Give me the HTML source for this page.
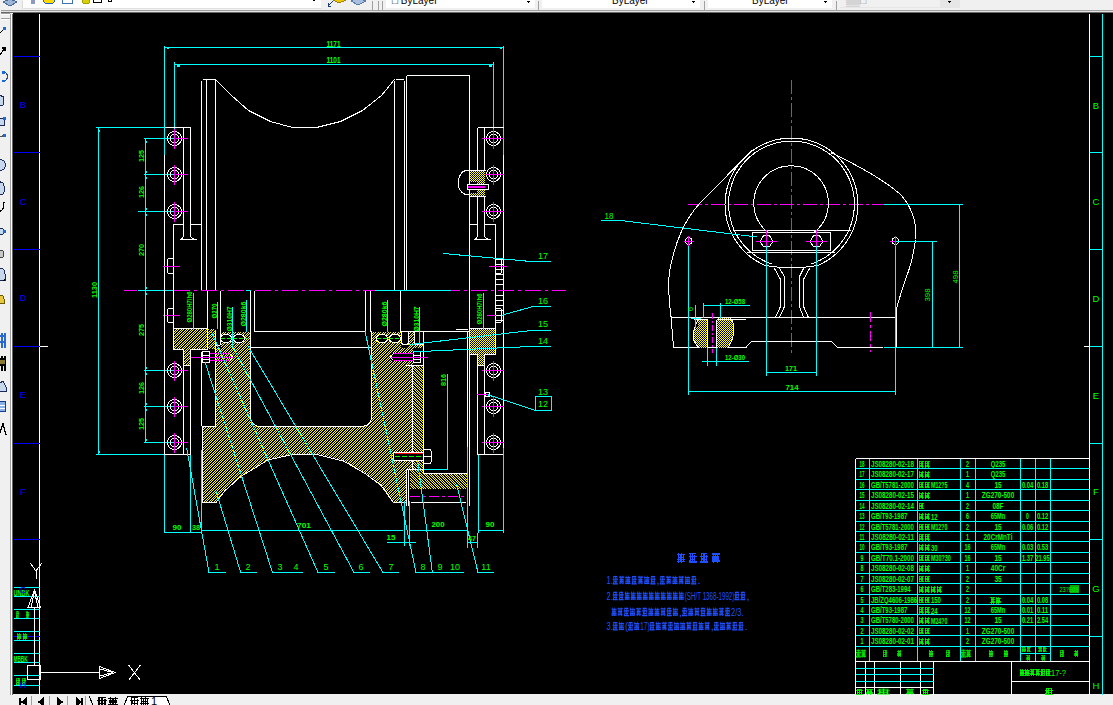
<!DOCTYPE html>
<html><head><meta charset="utf-8">
<style>
html,body{margin:0;padding:0;width:1113px;height:705px;overflow:hidden;background:#000;font-family:"Liberation Sans",sans-serif;}
#s{position:absolute;left:0;top:0;}
text{font-family:"Liberation Sans",sans-serif;}
</style></head><body>
<svg id="s" width="1113" height="705" viewBox="0 0 1113 705" shape-rendering="crispEdges">
<defs>
<pattern id="hat" width="5" height="5" patternUnits="userSpaceOnUse"><rect width="5" height="5" fill="#000"/><rect x="0" y="0" width="1" height="1" fill="#ff0"/><rect x="2" y="0" width="1" height="1" fill="#ff0"/><rect x="1" y="1" width="1" height="1" fill="#ff0"/><rect x="4" y="1" width="1" height="1" fill="#ff0"/><rect x="0" y="2" width="1" height="1" fill="#ff0"/><rect x="3" y="2" width="1" height="1" fill="#ff0"/><rect x="2" y="3" width="1" height="1" fill="#ff0"/><rect x="4" y="3" width="1" height="1" fill="#ff0"/><rect x="1" y="4" width="1" height="1" fill="#ff0"/><rect x="3" y="4" width="1" height="1" fill="#ff0"/></pattern>
<pattern id="hat2" width="5" height="5" patternUnits="userSpaceOnUse"><rect width="5" height="5" fill="#000"/><rect x="0" y="0" width="1" height="1" fill="#ff0"/><rect x="2" y="0" width="1" height="1" fill="#ff0"/><rect x="1" y="1" width="1" height="1" fill="#ff0"/><rect x="3" y="1" width="1" height="1" fill="#ff0"/><rect x="2" y="2" width="1" height="1" fill="#ff0"/><rect x="4" y="2" width="1" height="1" fill="#ff0"/><rect x="0" y="3" width="1" height="1" fill="#ff0"/><rect x="3" y="3" width="1" height="1" fill="#ff0"/><rect x="1" y="4" width="1" height="1" fill="#ff0"/><rect x="4" y="4" width="1" height="1" fill="#ff0"/></pattern>
<pattern id="xhat" width="2" height="2" patternUnits="userSpaceOnUse"><rect width="2" height="2" fill="#000"/><rect width="1" height="1" fill="#ff0"/><rect x="1" y="1" width="1" height="1" fill="#ff0"/></pattern>
<symbol id="hz0" viewBox="0 0 10 10" overflow="visible"><path d="M0,1.5H10M1,4.5H9M0,8.5H10M2.5,0V10M7.5,0V10M5,1.5V8.5M1,6.5H9" stroke="currentColor" stroke-width="1.3" fill="none"/></symbol>
<symbol id="hz1" viewBox="0 0 10 10" overflow="visible"><path d="M1,1H9M0,4H10M2,7H8M0,9.5H10M2,1V10M5,0V10M8,2V9M3,5L1,9" stroke="currentColor" stroke-width="1.3" fill="none"/></symbol>
<symbol id="hz2" viewBox="0 0 10 10" overflow="visible"><path d="M0,2H10M1,5H9M0,9H10M1.5,0V10M4,2V9M6,0V10M8.5,2V9M0,7H10" stroke="currentColor" stroke-width="1.3" fill="none"/></symbol>
</defs>
<rect x="0" y="0" width="1113" height="13" fill="#f0f0f0"/>
<rect x="0" y="0" width="13" height="705" fill="#f0f0f0"/>
<rect x="0" y="694" width="1113" height="11" fill="#f0f0f0"/>
<rect x="13" y="13" width="1100" height="681" fill="#000"/>
<g shape-rendering="crispEdges">
<line x1="39.5" y1="13.5" x2="39.5" y2="694.5" stroke="#ffffff" stroke-width="1" />
<line x1="13.5" y1="56.5" x2="39.5" y2="56.5" stroke="#0000ff" stroke-width="1" />
<line x1="13.5" y1="152.5" x2="39.5" y2="152.5" stroke="#0000ff" stroke-width="1" />
<line x1="13.5" y1="249.5" x2="39.5" y2="249.5" stroke="#0000ff" stroke-width="1" />
<line x1="13.5" y1="346.5" x2="39.5" y2="346.5" stroke="#0000ff" stroke-width="1" />
<line x1="13.5" y1="443.5" x2="39.5" y2="443.5" stroke="#0000ff" stroke-width="1" />
<line x1="13.5" y1="539.5" x2="39.5" y2="539.5" stroke="#0000ff" stroke-width="1" />
<line x1="13.5" y1="636.5" x2="39.5" y2="636.5" stroke="#0000ff" stroke-width="1" />
<line x1="39.5" y1="346.5" x2="47.5" y2="346.5" stroke="#ffffff" stroke-width="1" />
<text x="23" y="108.0" fill="#0000ff" font-size="9.5"  text-anchor="middle" >B</text>
<text x="23" y="204.7" fill="#0000ff" font-size="9.5"  text-anchor="middle" >C</text>
<text x="23" y="301.4" fill="#0000ff" font-size="9.5"  text-anchor="middle" >D</text>
<text x="23" y="398.1" fill="#0000ff" font-size="9.5"  text-anchor="middle" >E</text>
<text x="23" y="494.8" fill="#0000ff" font-size="9.5"  text-anchor="middle" >F</text>
<line x1="1089.5" y1="13.5" x2="1089.5" y2="694.5" stroke="#ffffff" stroke-width="1" />
<line x1="1102.5" y1="13.5" x2="1102.5" y2="694.5" stroke="#00ffff" stroke-width="1" />
<line x1="1089.5" y1="56.5" x2="1102.5" y2="56.5" stroke="#00ffff" stroke-width="1" />
<line x1="1089.5" y1="152.5" x2="1102.5" y2="152.5" stroke="#00ffff" stroke-width="1" />
<line x1="1089.5" y1="249.5" x2="1102.5" y2="249.5" stroke="#00ffff" stroke-width="1" />
<line x1="1089.5" y1="346.5" x2="1102.5" y2="346.5" stroke="#00ffff" stroke-width="1" />
<line x1="1089.5" y1="443.5" x2="1102.5" y2="443.5" stroke="#00ffff" stroke-width="1" />
<line x1="1089.5" y1="539.5" x2="1102.5" y2="539.5" stroke="#00ffff" stroke-width="1" />
<line x1="1089.5" y1="636.5" x2="1102.5" y2="636.5" stroke="#00ffff" stroke-width="1" />
<line x1="1083.5" y1="346.5" x2="1089.5" y2="346.5" stroke="#ffffff" stroke-width="1" />
<text x="1096" y="108.5" fill="#00ff00" font-size="9.5"  text-anchor="middle" >B</text>
<text x="1096" y="205.2" fill="#00ff00" font-size="9.5"  text-anchor="middle" >C</text>
<text x="1096" y="301.9" fill="#00ff00" font-size="9.5"  text-anchor="middle" >D</text>
<text x="1096" y="398.6" fill="#00ff00" font-size="9.5"  text-anchor="middle" >E</text>
<text x="1096" y="495.3" fill="#00ff00" font-size="9.5"  text-anchor="middle" >F</text>
<text x="1096" y="592.0" fill="#00ff00" font-size="9.5"  text-anchor="middle" >G</text>
<text x="1096" y="688.7" fill="#00ff00" font-size="9.5"  text-anchor="middle" >H</text>
</g>
<g shape-rendering="crispEdges">
<line x1="855.5" y1="468.5" x2="1089.5" y2="468.5" stroke="#00ffff" stroke-width="1" />
<line x1="855.5" y1="479.5" x2="1089.5" y2="479.5" stroke="#00ffff" stroke-width="1" />
<line x1="855.5" y1="489.5" x2="1089.5" y2="489.5" stroke="#00ffff" stroke-width="1" />
<line x1="855.5" y1="500.5" x2="1089.5" y2="500.5" stroke="#00ffff" stroke-width="1" />
<line x1="855.5" y1="510.5" x2="1089.5" y2="510.5" stroke="#00ffff" stroke-width="1" />
<line x1="855.5" y1="521.5" x2="1089.5" y2="521.5" stroke="#00ffff" stroke-width="1" />
<line x1="855.5" y1="531.5" x2="1089.5" y2="531.5" stroke="#00ffff" stroke-width="1" />
<line x1="855.5" y1="541.5" x2="1089.5" y2="541.5" stroke="#00ffff" stroke-width="1" />
<line x1="855.5" y1="552.5" x2="1089.5" y2="552.5" stroke="#00ffff" stroke-width="1" />
<line x1="855.5" y1="562.5" x2="1089.5" y2="562.5" stroke="#00ffff" stroke-width="1" />
<line x1="855.5" y1="573.5" x2="1089.5" y2="573.5" stroke="#00ffff" stroke-width="1" />
<line x1="855.5" y1="583.5" x2="1089.5" y2="583.5" stroke="#00ffff" stroke-width="1" />
<line x1="855.5" y1="594.5" x2="1089.5" y2="594.5" stroke="#00ffff" stroke-width="1" />
<line x1="855.5" y1="604.5" x2="1089.5" y2="604.5" stroke="#00ffff" stroke-width="1" />
<line x1="855.5" y1="614.5" x2="1089.5" y2="614.5" stroke="#00ffff" stroke-width="1" />
<line x1="855.5" y1="625.5" x2="1089.5" y2="625.5" stroke="#00ffff" stroke-width="1" />
<line x1="855.5" y1="635.5" x2="1089.5" y2="635.5" stroke="#00ffff" stroke-width="1" />
<line x1="855.5" y1="646.5" x2="1089.5" y2="646.5" stroke="#00ffff" stroke-width="1" />
<line x1="855.5" y1="458.5" x2="1089.5" y2="458.5" stroke="#ffffff" stroke-width="1" />
<line x1="855.5" y1="458.5" x2="855.5" y2="694.5" stroke="#ffffff" stroke-width="1" />
<line x1="869.5" y1="458.5" x2="869.5" y2="661.5" stroke="#00ffff" stroke-width="1" />
<line x1="917.5" y1="458.5" x2="917.5" y2="661.5" stroke="#00ffff" stroke-width="1" />
<line x1="960.5" y1="458.5" x2="960.5" y2="661.5" stroke="#00ffff" stroke-width="1" />
<line x1="975.5" y1="458.5" x2="975.5" y2="661.5" stroke="#00ffff" stroke-width="1" />
<line x1="1020.5" y1="458.5" x2="1020.5" y2="661.5" stroke="#00ffff" stroke-width="1" />
<line x1="1035.5" y1="458.5" x2="1035.5" y2="661.5" stroke="#00ffff" stroke-width="1" />
<line x1="1050.5" y1="458.5" x2="1050.5" y2="661.5" stroke="#00ffff" stroke-width="1" />
<line x1="1020.5" y1="653.5" x2="1050.5" y2="653.5" stroke="#00ffff" stroke-width="1" />
<line x1="855.5" y1="661.5" x2="1089.5" y2="661.5" stroke="#ffffff" stroke-width="1" />
<line x1="865.5" y1="661.5" x2="865.5" y2="694.5" stroke="#ffffff" stroke-width="1" />
<line x1="874.5" y1="661.5" x2="874.5" y2="694.5" stroke="#ffffff" stroke-width="1" />
<line x1="900.5" y1="661.5" x2="900.5" y2="694.5" stroke="#ffffff" stroke-width="1" />
<line x1="920.5" y1="661.5" x2="920.5" y2="694.5" stroke="#ffffff" stroke-width="1" />
<line x1="933.5" y1="661.5" x2="933.5" y2="694.5" stroke="#ffffff" stroke-width="1" />
<line x1="855.5" y1="668.5" x2="933.5" y2="668.5" stroke="#00ffff" stroke-width="1" />
<line x1="855.5" y1="674.5" x2="933.5" y2="674.5" stroke="#00ffff" stroke-width="1" />
<line x1="855.5" y1="681.5" x2="933.5" y2="681.5" stroke="#00ffff" stroke-width="1" />
<line x1="855.5" y1="687.5" x2="933.5" y2="687.5" stroke="#ffffff" stroke-width="1" />
<line x1="1011.5" y1="661.5" x2="1011.5" y2="694.5" stroke="#ffffff" stroke-width="1" />
<line x1="1011.5" y1="681.5" x2="1089.5" y2="681.5" stroke="#ffffff" stroke-width="1" />
</g>
<text x="862" y="466.93" fill="#00ff00" font-size="8.5" font-weight="bold" text-anchor="middle" textLength="5" lengthAdjust="spacingAndGlyphs">18</text>
<text x="871" y="466.93" fill="#00ff00" font-size="8.5" font-weight="bold" text-anchor="start" textLength="42.9" lengthAdjust="spacingAndGlyphs">JS08280-02-18</text>
<text x="967.5" y="466.93" fill="#00ff00" font-size="8.5" font-weight="bold" text-anchor="middle" textLength="3" lengthAdjust="spacingAndGlyphs">2</text>
<text x="998" y="466.93" fill="#00ff00" font-size="8.5" font-weight="bold" text-anchor="middle" textLength="14.4" lengthAdjust="spacingAndGlyphs">Q235</text>
<text x="862" y="477.36" fill="#00ff00" font-size="8.5" font-weight="bold" text-anchor="middle" textLength="5" lengthAdjust="spacingAndGlyphs">17</text>
<text x="871" y="477.36" fill="#00ff00" font-size="8.5" font-weight="bold" text-anchor="start" textLength="42.9" lengthAdjust="spacingAndGlyphs">JS08280-02-17</text>
<text x="967.5" y="477.36" fill="#00ff00" font-size="8.5" font-weight="bold" text-anchor="middle" textLength="3" lengthAdjust="spacingAndGlyphs">1</text>
<text x="998" y="477.36" fill="#00ff00" font-size="8.5" font-weight="bold" text-anchor="middle" textLength="14.4" lengthAdjust="spacingAndGlyphs">Q235</text>
<text x="862" y="487.79" fill="#00ff00" font-size="8.5" font-weight="bold" text-anchor="middle" textLength="5" lengthAdjust="spacingAndGlyphs">16</text>
<text x="871" y="487.79" fill="#00ff00" font-size="8.5" font-weight="bold" text-anchor="start" textLength="42.9" lengthAdjust="spacingAndGlyphs">GB/T5781-2000</text>
<text x="967.5" y="487.79" fill="#00ff00" font-size="8.5" font-weight="bold" text-anchor="middle" textLength="3" lengthAdjust="spacingAndGlyphs">4</text>
<text x="998" y="487.79" fill="#00ff00" font-size="8.5" font-weight="bold" text-anchor="middle" textLength="7.2" lengthAdjust="spacingAndGlyphs">15</text>
<text x="1027.5" y="487.79" fill="#00ff00" font-size="8.5" font-weight="bold" text-anchor="middle" textLength="11.2" lengthAdjust="spacingAndGlyphs">0.04</text>
<text x="1042.5" y="487.79" fill="#00ff00" font-size="8.5" font-weight="bold" text-anchor="middle" textLength="11.2" lengthAdjust="spacingAndGlyphs">0.18</text>
<text x="862" y="498.22" fill="#00ff00" font-size="8.5" font-weight="bold" text-anchor="middle" textLength="5" lengthAdjust="spacingAndGlyphs">15</text>
<text x="871" y="498.22" fill="#00ff00" font-size="8.5" font-weight="bold" text-anchor="start" textLength="42.9" lengthAdjust="spacingAndGlyphs">JS08280-02-15</text>
<text x="967.5" y="498.22" fill="#00ff00" font-size="8.5" font-weight="bold" text-anchor="middle" textLength="3" lengthAdjust="spacingAndGlyphs">1</text>
<text x="998" y="498.22" fill="#00ff00" font-size="8.5" font-weight="bold" text-anchor="middle" textLength="32.4" lengthAdjust="spacingAndGlyphs">ZG270-500</text>
<text x="862" y="508.65" fill="#00ff00" font-size="8.5" font-weight="bold" text-anchor="middle" textLength="5" lengthAdjust="spacingAndGlyphs">14</text>
<text x="871" y="508.65" fill="#00ff00" font-size="8.5" font-weight="bold" text-anchor="start" textLength="42.9" lengthAdjust="spacingAndGlyphs">JS08280-02-14</text>
<text x="967.5" y="508.65" fill="#00ff00" font-size="8.5" font-weight="bold" text-anchor="middle" textLength="3" lengthAdjust="spacingAndGlyphs">2</text>
<text x="998" y="508.65" fill="#00ff00" font-size="8.5" font-weight="bold" text-anchor="middle" textLength="10.8" lengthAdjust="spacingAndGlyphs">08F</text>
<text x="862" y="519.08" fill="#00ff00" font-size="8.5" font-weight="bold" text-anchor="middle" textLength="5" lengthAdjust="spacingAndGlyphs">13</text>
<text x="871" y="519.08" fill="#00ff00" font-size="8.5" font-weight="bold" text-anchor="start" textLength="36.3" lengthAdjust="spacingAndGlyphs">GB/T93-1987</text>
<text x="967.5" y="519.08" fill="#00ff00" font-size="8.5" font-weight="bold" text-anchor="middle" textLength="3" lengthAdjust="spacingAndGlyphs">6</text>
<text x="998" y="519.08" fill="#00ff00" font-size="8.5" font-weight="bold" text-anchor="middle" textLength="14.4" lengthAdjust="spacingAndGlyphs">65Mn</text>
<text x="1027.5" y="519.08" fill="#00ff00" font-size="8.5" font-weight="bold" text-anchor="middle" textLength="2.8" lengthAdjust="spacingAndGlyphs">0</text>
<text x="1042.5" y="519.08" fill="#00ff00" font-size="8.5" font-weight="bold" text-anchor="middle" textLength="11.2" lengthAdjust="spacingAndGlyphs">0.12</text>
<text x="862" y="529.51" fill="#00ff00" font-size="8.5" font-weight="bold" text-anchor="middle" textLength="5" lengthAdjust="spacingAndGlyphs">12</text>
<text x="871" y="529.51" fill="#00ff00" font-size="8.5" font-weight="bold" text-anchor="start" textLength="42.9" lengthAdjust="spacingAndGlyphs">GB/T5781-2000</text>
<text x="967.5" y="529.51" fill="#00ff00" font-size="8.5" font-weight="bold" text-anchor="middle" textLength="3" lengthAdjust="spacingAndGlyphs">2</text>
<text x="998" y="529.51" fill="#00ff00" font-size="8.5" font-weight="bold" text-anchor="middle" textLength="7.2" lengthAdjust="spacingAndGlyphs">15</text>
<text x="1027.5" y="529.51" fill="#00ff00" font-size="8.5" font-weight="bold" text-anchor="middle" textLength="11.2" lengthAdjust="spacingAndGlyphs">0.06</text>
<text x="1042.5" y="529.51" fill="#00ff00" font-size="8.5" font-weight="bold" text-anchor="middle" textLength="11.2" lengthAdjust="spacingAndGlyphs">0.12</text>
<text x="862" y="539.94" fill="#00ff00" font-size="8.5" font-weight="bold" text-anchor="middle" textLength="5" lengthAdjust="spacingAndGlyphs">11</text>
<text x="871" y="539.94" fill="#00ff00" font-size="8.5" font-weight="bold" text-anchor="start" textLength="42.9" lengthAdjust="spacingAndGlyphs">JS08280-02-11</text>
<text x="967.5" y="539.94" fill="#00ff00" font-size="8.5" font-weight="bold" text-anchor="middle" textLength="3" lengthAdjust="spacingAndGlyphs">1</text>
<text x="998" y="539.94" fill="#00ff00" font-size="8.5" font-weight="bold" text-anchor="middle" textLength="28.8" lengthAdjust="spacingAndGlyphs">20CrMnTi</text>
<text x="862" y="550.37" fill="#00ff00" font-size="8.5" font-weight="bold" text-anchor="middle" textLength="5" lengthAdjust="spacingAndGlyphs">10</text>
<text x="871" y="550.37" fill="#00ff00" font-size="8.5" font-weight="bold" text-anchor="start" textLength="36.3" lengthAdjust="spacingAndGlyphs">GB/T93-1987</text>
<text x="967.5" y="550.37" fill="#00ff00" font-size="8.5" font-weight="bold" text-anchor="middle" textLength="6" lengthAdjust="spacingAndGlyphs">16</text>
<text x="998" y="550.37" fill="#00ff00" font-size="8.5" font-weight="bold" text-anchor="middle" textLength="14.4" lengthAdjust="spacingAndGlyphs">65Mn</text>
<text x="1027.5" y="550.37" fill="#00ff00" font-size="8.5" font-weight="bold" text-anchor="middle" textLength="11.2" lengthAdjust="spacingAndGlyphs">0.03</text>
<text x="1042.5" y="550.37" fill="#00ff00" font-size="8.5" font-weight="bold" text-anchor="middle" textLength="11.2" lengthAdjust="spacingAndGlyphs">0.53</text>
<text x="862" y="560.8" fill="#00ff00" font-size="8.5" font-weight="bold" text-anchor="middle" textLength="3" lengthAdjust="spacingAndGlyphs">9</text>
<text x="871" y="560.8" fill="#00ff00" font-size="8.5" font-weight="bold" text-anchor="start" textLength="42.9" lengthAdjust="spacingAndGlyphs">GB/T70.1-2000</text>
<text x="967.5" y="560.8" fill="#00ff00" font-size="8.5" font-weight="bold" text-anchor="middle" textLength="6" lengthAdjust="spacingAndGlyphs">16</text>
<text x="998" y="560.8" fill="#00ff00" font-size="8.5" font-weight="bold" text-anchor="middle" textLength="7.2" lengthAdjust="spacingAndGlyphs">15</text>
<text x="1027.5" y="560.8" fill="#00ff00" font-size="8.5" font-weight="bold" text-anchor="middle" textLength="11.2" lengthAdjust="spacingAndGlyphs">1.37</text>
<text x="1042.5" y="560.8" fill="#00ff00" font-size="8.5" font-weight="bold" text-anchor="middle" textLength="14.0" lengthAdjust="spacingAndGlyphs">21.95</text>
<text x="862" y="571.23" fill="#00ff00" font-size="8.5" font-weight="bold" text-anchor="middle" textLength="3" lengthAdjust="spacingAndGlyphs">8</text>
<text x="871" y="571.23" fill="#00ff00" font-size="8.5" font-weight="bold" text-anchor="start" textLength="42.9" lengthAdjust="spacingAndGlyphs">JS08280-02-08</text>
<text x="967.5" y="571.23" fill="#00ff00" font-size="8.5" font-weight="bold" text-anchor="middle" textLength="3" lengthAdjust="spacingAndGlyphs">1</text>
<text x="998" y="571.23" fill="#00ff00" font-size="8.5" font-weight="bold" text-anchor="middle" textLength="14.4" lengthAdjust="spacingAndGlyphs">40Cr</text>
<text x="862" y="581.66" fill="#00ff00" font-size="8.5" font-weight="bold" text-anchor="middle" textLength="3" lengthAdjust="spacingAndGlyphs">7</text>
<text x="871" y="581.66" fill="#00ff00" font-size="8.5" font-weight="bold" text-anchor="start" textLength="42.9" lengthAdjust="spacingAndGlyphs">JS08280-02-07</text>
<text x="967.5" y="581.66" fill="#00ff00" font-size="8.5" font-weight="bold" text-anchor="middle" textLength="3" lengthAdjust="spacingAndGlyphs">2</text>
<text x="998" y="581.66" fill="#00ff00" font-size="8.5" font-weight="bold" text-anchor="middle" textLength="7.2" lengthAdjust="spacingAndGlyphs">35</text>
<text x="862" y="592.09" fill="#00ff00" font-size="8.5" font-weight="bold" text-anchor="middle" textLength="3" lengthAdjust="spacingAndGlyphs">6</text>
<text x="871" y="592.09" fill="#00ff00" font-size="8.5" font-weight="bold" text-anchor="start" textLength="39.599999999999994" lengthAdjust="spacingAndGlyphs">GB/T283-1994</text>
<text x="967.5" y="592.09" fill="#00ff00" font-size="8.5" font-weight="bold" text-anchor="middle" textLength="3" lengthAdjust="spacingAndGlyphs">2</text>
<text x="862" y="602.52" fill="#00ff00" font-size="8.5" font-weight="bold" text-anchor="middle" textLength="3" lengthAdjust="spacingAndGlyphs">5</text>
<text x="871" y="602.52" fill="#00ff00" font-size="8.5" font-weight="bold" text-anchor="start" textLength="46.199999999999996" lengthAdjust="spacingAndGlyphs">JB/ZQ4606-1986</text>
<text x="967.5" y="602.52" fill="#00ff00" font-size="8.5" font-weight="bold" text-anchor="middle" textLength="3" lengthAdjust="spacingAndGlyphs">2</text>
<text x="1027.5" y="602.52" fill="#00ff00" font-size="8.5" font-weight="bold" text-anchor="middle" textLength="11.2" lengthAdjust="spacingAndGlyphs">0.04</text>
<text x="1042.5" y="602.52" fill="#00ff00" font-size="8.5" font-weight="bold" text-anchor="middle" textLength="11.2" lengthAdjust="spacingAndGlyphs">0.08</text>
<text x="862" y="612.95" fill="#00ff00" font-size="8.5" font-weight="bold" text-anchor="middle" textLength="3" lengthAdjust="spacingAndGlyphs">4</text>
<text x="871" y="612.95" fill="#00ff00" font-size="8.5" font-weight="bold" text-anchor="start" textLength="36.3" lengthAdjust="spacingAndGlyphs">GB/T93-1987</text>
<text x="967.5" y="612.95" fill="#00ff00" font-size="8.5" font-weight="bold" text-anchor="middle" textLength="6" lengthAdjust="spacingAndGlyphs">12</text>
<text x="998" y="612.95" fill="#00ff00" font-size="8.5" font-weight="bold" text-anchor="middle" textLength="14.4" lengthAdjust="spacingAndGlyphs">65Mn</text>
<text x="1027.5" y="612.95" fill="#00ff00" font-size="8.5" font-weight="bold" text-anchor="middle" textLength="11.2" lengthAdjust="spacingAndGlyphs">0.01</text>
<text x="1042.5" y="612.95" fill="#00ff00" font-size="8.5" font-weight="bold" text-anchor="middle" textLength="11.2" lengthAdjust="spacingAndGlyphs">0.11</text>
<text x="862" y="623.38" fill="#00ff00" font-size="8.5" font-weight="bold" text-anchor="middle" textLength="3" lengthAdjust="spacingAndGlyphs">3</text>
<text x="871" y="623.38" fill="#00ff00" font-size="8.5" font-weight="bold" text-anchor="start" textLength="42.9" lengthAdjust="spacingAndGlyphs">GB/T5780-2000</text>
<text x="967.5" y="623.38" fill="#00ff00" font-size="8.5" font-weight="bold" text-anchor="middle" textLength="6" lengthAdjust="spacingAndGlyphs">12</text>
<text x="998" y="623.38" fill="#00ff00" font-size="8.5" font-weight="bold" text-anchor="middle" textLength="7.2" lengthAdjust="spacingAndGlyphs">15</text>
<text x="1027.5" y="623.38" fill="#00ff00" font-size="8.5" font-weight="bold" text-anchor="middle" textLength="11.2" lengthAdjust="spacingAndGlyphs">0.21</text>
<text x="1042.5" y="623.38" fill="#00ff00" font-size="8.5" font-weight="bold" text-anchor="middle" textLength="11.2" lengthAdjust="spacingAndGlyphs">2.54</text>
<text x="862" y="633.81" fill="#00ff00" font-size="8.5" font-weight="bold" text-anchor="middle" textLength="3" lengthAdjust="spacingAndGlyphs">2</text>
<text x="871" y="633.81" fill="#00ff00" font-size="8.5" font-weight="bold" text-anchor="start" textLength="42.9" lengthAdjust="spacingAndGlyphs">JS08280-02-02</text>
<text x="967.5" y="633.81" fill="#00ff00" font-size="8.5" font-weight="bold" text-anchor="middle" textLength="3" lengthAdjust="spacingAndGlyphs">1</text>
<text x="998" y="633.81" fill="#00ff00" font-size="8.5" font-weight="bold" text-anchor="middle" textLength="32.4" lengthAdjust="spacingAndGlyphs">ZG270-500</text>
<text x="862" y="644.24" fill="#00ff00" font-size="8.5" font-weight="bold" text-anchor="middle" textLength="3" lengthAdjust="spacingAndGlyphs">1</text>
<text x="871" y="644.24" fill="#00ff00" font-size="8.5" font-weight="bold" text-anchor="start" textLength="42.9" lengthAdjust="spacingAndGlyphs">JS08280-02-01</text>
<text x="967.5" y="644.24" fill="#00ff00" font-size="8.5" font-weight="bold" text-anchor="middle" textLength="3" lengthAdjust="spacingAndGlyphs">2</text>
<text x="998" y="644.24" fill="#00ff00" font-size="8.5" font-weight="bold" text-anchor="middle" textLength="32.4" lengthAdjust="spacingAndGlyphs">ZG270-500</text>
<g shape-rendering="crispEdges">
<line x1="164.5" y1="45.5" x2="164.5" y2="154.5" stroke="#00ffff" stroke-width="1" />
<line x1="164.5" y1="47.5" x2="503.5" y2="47.5" stroke="#00ffff" stroke-width="1" />
<line x1="503.5" y1="45.5" x2="503.5" y2="154.5" stroke="#00ffff" stroke-width="1" />
<line x1="174.5" y1="61.5" x2="174.5" y2="138.5" stroke="#00ffff" stroke-width="1" />
<line x1="174.5" y1="64.5" x2="493.5" y2="64.5" stroke="#00ffff" stroke-width="1" />
<line x1="493.5" y1="61.5" x2="493.5" y2="138.5" stroke="#00ffff" stroke-width="1" />
</g>
<text x="333.5" y="46.5" fill="#00ff00" font-size="8.5" font-weight="bold" text-anchor="middle" textLength="14" lengthAdjust="spacingAndGlyphs">1171</text>
<text x="333.5" y="63" fill="#00ff00" font-size="8.5" font-weight="bold" text-anchor="middle" textLength="14" lengthAdjust="spacingAndGlyphs">1101</text>
<g shape-rendering="crispEdges">
<line x1="95.5" y1="127.5" x2="164.5" y2="127.5" stroke="#00ffff" stroke-width="1" />
<line x1="98.5" y1="127.5" x2="98.5" y2="454.5" stroke="#00ffff" stroke-width="1" />
<line x1="95.5" y1="454.5" x2="164.5" y2="454.5" stroke="#00ffff" stroke-width="1" />
<line x1="143.5" y1="138.5" x2="174.5" y2="138.5" stroke="#00ffff" stroke-width="1" />
<line x1="143.5" y1="174.5" x2="174.5" y2="174.5" stroke="#00ffff" stroke-width="1" />
<line x1="137.5" y1="211.5" x2="174.5" y2="211.5" stroke="#00ffff" stroke-width="1" />
<line x1="143.5" y1="370.5" x2="174.5" y2="370.5" stroke="#00ffff" stroke-width="1" />
<line x1="143.5" y1="406.5" x2="174.5" y2="406.5" stroke="#00ffff" stroke-width="1" />
<line x1="143.5" y1="442.5" x2="174.5" y2="442.5" stroke="#00ffff" stroke-width="1" />
<line x1="145.5" y1="138.5" x2="145.5" y2="442.5" stroke="#00ffff" stroke-width="1" />
<rect x="145" y="141" width="2" height="2" fill="#00ffff"/>
<rect x="145" y="171" width="2" height="2" fill="#00ffff"/>
<rect x="145" y="177" width="2" height="2" fill="#00ffff"/>
<rect x="145" y="208" width="2" height="2" fill="#00ffff"/>
<rect x="145" y="214" width="2" height="2" fill="#00ffff"/>
<rect x="145" y="287" width="2" height="2" fill="#00ffff"/>
<rect x="145" y="293" width="2" height="2" fill="#00ffff"/>
<rect x="145" y="367" width="2" height="2" fill="#00ffff"/>
<rect x="145" y="373" width="2" height="2" fill="#00ffff"/>
<rect x="145" y="403" width="2" height="2" fill="#00ffff"/>
<rect x="145" y="409" width="2" height="2" fill="#00ffff"/>
<rect x="145" y="439" width="2" height="2" fill="#00ffff"/>
<rect x="98" y="130" width="2" height="2" fill="#00ffff"/>
<rect x="98" y="451" width="2" height="2" fill="#00ffff"/>
<rect x="167" y="47" width="2" height="2" fill="#00ffff"/>
<rect x="500" y="47" width="2" height="2" fill="#00ffff"/>
<rect x="177" y="64" width="3" height="3" fill="#00ffff"/>
<rect x="489" y="64" width="3" height="3" fill="#00ffff"/>
<line x1="137.5" y1="290.5" x2="173.5" y2="290.5" stroke="#00ffff" stroke-width="1" />
<line x1="123.5" y1="290.5" x2="136.5" y2="290.5" stroke="#ff00ff" stroke-width="1" />
</g>
<text x="0" y="0" fill="#00ff00" font-size="8" font-weight="bold" text-anchor="middle" textLength="16" lengthAdjust="spacingAndGlyphs" transform="translate(97,290) rotate(-90)">1130</text>
<text x="0" y="0" fill="#00ff00" font-size="8" font-weight="bold" text-anchor="middle" textLength="12" lengthAdjust="spacingAndGlyphs" transform="translate(144,156) rotate(-90)">125</text>
<text x="0" y="0" fill="#00ff00" font-size="8" font-weight="bold" text-anchor="middle" textLength="12" lengthAdjust="spacingAndGlyphs" transform="translate(144,192) rotate(-90)">126</text>
<text x="0" y="0" fill="#00ff00" font-size="8" font-weight="bold" text-anchor="middle" textLength="12" lengthAdjust="spacingAndGlyphs" transform="translate(144,250) rotate(-90)">270</text>
<text x="0" y="0" fill="#00ff00" font-size="8" font-weight="bold" text-anchor="middle" textLength="12" lengthAdjust="spacingAndGlyphs" transform="translate(144,330) rotate(-90)">275</text>
<text x="0" y="0" fill="#00ff00" font-size="8" font-weight="bold" text-anchor="middle" textLength="12" lengthAdjust="spacingAndGlyphs" transform="translate(144,388) rotate(-90)">126</text>
<text x="0" y="0" fill="#00ff00" font-size="8" font-weight="bold" text-anchor="middle" textLength="12" lengthAdjust="spacingAndGlyphs" transform="translate(144,424) rotate(-90)">125</text>
<g shape-rendering="crispEdges">
<line x1="201.5" y1="80.5" x2="201.5" y2="290.5" stroke="#ffffff" stroke-width="1" />
<line x1="206.5" y1="79.5" x2="206.5" y2="290.5" stroke="#ffffff" stroke-width="1" />
<line x1="215.5" y1="79.5" x2="215.5" y2="290.5" stroke="#ffffff" stroke-width="1" />
<line x1="202.5" y1="79.5" x2="215.5" y2="79.5" stroke="#ffffff" stroke-width="1" />
<line x1="394.5" y1="80.5" x2="394.5" y2="290.5" stroke="#ffffff" stroke-width="1" />
<line x1="404.5" y1="80.5" x2="404.5" y2="290.5" stroke="#ffffff" stroke-width="1" />
<line x1="395.5" y1="79.5" x2="403.5" y2="79.5" stroke="#ffffff" stroke-width="1" />
<line x1="406.5" y1="75.5" x2="406.5" y2="290.5" stroke="#ffffff" stroke-width="1" />
<line x1="469.5" y1="75.5" x2="469.5" y2="328.5" stroke="#ffffff" stroke-width="1" />
<line x1="406.5" y1="75.5" x2="469.5" y2="75.5" stroke="#ffffff" stroke-width="1" />
<line x1="164.5" y1="127.5" x2="190.5" y2="127.5" stroke="#ffffff" stroke-width="1" />
<line x1="164.5" y1="154.5" x2="164.5" y2="454.5" stroke="#ffffff" stroke-width="1" />
<line x1="183.5" y1="127.5" x2="183.5" y2="235.5" stroke="#ffffff" stroke-width="1" />
<line x1="190.5" y1="127.5" x2="190.5" y2="235.5" stroke="#ffffff" stroke-width="1" />
<line x1="477.5" y1="127.5" x2="503.5" y2="127.5" stroke="#ffffff" stroke-width="1" />
<line x1="503.5" y1="154.5" x2="503.5" y2="454.5" stroke="#ffffff" stroke-width="1" />
<line x1="484.5" y1="127.5" x2="484.5" y2="235.5" stroke="#ffffff" stroke-width="1" />
<line x1="477.5" y1="127.5" x2="477.5" y2="235.5" stroke="#ffffff" stroke-width="1" />
<line x1="164.5" y1="454.5" x2="190.5" y2="454.5" stroke="#ffffff" stroke-width="1" />
<line x1="477.5" y1="454.5" x2="503.5" y2="454.5" stroke="#ffffff" stroke-width="1" />
</g>
<path d="M215.5,79.5 L231.5,95.5 L248.5,110.5 L270.5,121.5 L292.5,127.5 L316.5,127.5 L340.5,121.5 L362.5,110.5 L381.5,95.5 L394.5,79.5" stroke="#ffffff" fill="none" />
<g shape-rendering="crispEdges">
<polyline points="173.5,328.5 173.5,224.5 181.5,224.5" stroke="#ffffff" fill="none" />
<polyline points="192.5,224.5 201.5,224.5" stroke="#ffffff" fill="none" />
<polyline points="495.5,328.5 495.5,224.5 486.5,224.5" stroke="#ffffff" fill="none" />
<polyline points="469.5,224.5 475.5,224.5" stroke="#ffffff" fill="none" />
</g>
<path d="M181.5,224.5 Q183.5,224.5 183.5,226.5 M190.5,226.5 Q190.5,224.5 192.5,224.5 M183.5,234.5 Q183.5,239.5 179.5,239.5 L196.5,239.5 Q190.5,239.5 190.5,234.5" stroke="#ffffff" fill="none" />
<path d="M475.5,224.5 Q477.5,224.5 477.5,226.5 M484.5,226.5 Q484.5,224.5 486.5,224.5 M477.5,234.5 Q477.5,239.5 473.5,239.5 L490.5,239.5 Q484.5,239.5 484.5,234.5" stroke="#ffffff" fill="none" />
<circle cx="174.5" cy="138.5" r="7" stroke="#ffffff" fill="none"/>
<circle cx="174.5" cy="138.5" r="4.3" stroke="#ffffff" fill="none"/>
<circle cx="174.5" cy="174.5" r="7" stroke="#ffffff" fill="none"/>
<circle cx="174.5" cy="174.5" r="4.3" stroke="#ffffff" fill="none"/>
<circle cx="174.5" cy="211.5" r="7" stroke="#ffffff" fill="none"/>
<circle cx="174.5" cy="211.5" r="4.3" stroke="#ffffff" fill="none"/>
<circle cx="174.5" cy="370.5" r="7" stroke="#ffffff" fill="none"/>
<circle cx="174.5" cy="370.5" r="4.3" stroke="#ffffff" fill="none"/>
<circle cx="174.5" cy="406.5" r="7" stroke="#ffffff" fill="none"/>
<circle cx="174.5" cy="406.5" r="4.3" stroke="#ffffff" fill="none"/>
<circle cx="174.5" cy="442.5" r="7" stroke="#ffffff" fill="none"/>
<circle cx="174.5" cy="442.5" r="4.3" stroke="#ffffff" fill="none"/>
<circle cx="493.5" cy="138.5" r="7" stroke="#ffffff" fill="none"/>
<circle cx="493.5" cy="138.5" r="4.3" stroke="#ffffff" fill="none"/>
<circle cx="493.5" cy="174.5" r="7" stroke="#ffffff" fill="none"/>
<circle cx="493.5" cy="174.5" r="4.3" stroke="#ffffff" fill="none"/>
<circle cx="493.5" cy="211.5" r="7" stroke="#ffffff" fill="none"/>
<circle cx="493.5" cy="211.5" r="4.3" stroke="#ffffff" fill="none"/>
<circle cx="493.5" cy="370.5" r="7" stroke="#ffffff" fill="none"/>
<circle cx="493.5" cy="370.5" r="4.3" stroke="#ffffff" fill="none"/>
<circle cx="493.5" cy="406.5" r="7" stroke="#ffffff" fill="none"/>
<circle cx="493.5" cy="406.5" r="4.3" stroke="#ffffff" fill="none"/>
<circle cx="493.5" cy="442.5" r="7" stroke="#ffffff" fill="none"/>
<circle cx="493.5" cy="442.5" r="4.3" stroke="#ffffff" fill="none"/>
<g shape-rendering="crispEdges">
<line x1="175.5" y1="138.5" x2="187.5" y2="138.5" stroke="#ff00ff" stroke-width="1" />
<line x1="174.5" y1="128.5" x2="174.5" y2="148.5" stroke="#ff00ff" stroke-width="1" />
<line x1="481.5" y1="138.5" x2="503.5" y2="138.5" stroke="#ff00ff" stroke-width="1" />
<line x1="493.5" y1="128.5" x2="493.5" y2="148.5" stroke="#ff00ff" stroke-width="1" />
<line x1="175.5" y1="174.5" x2="187.5" y2="174.5" stroke="#ff00ff" stroke-width="1" />
<line x1="174.5" y1="164.5" x2="174.5" y2="184.5" stroke="#ff00ff" stroke-width="1" />
<line x1="481.5" y1="174.5" x2="503.5" y2="174.5" stroke="#ff00ff" stroke-width="1" />
<line x1="493.5" y1="164.5" x2="493.5" y2="184.5" stroke="#ff00ff" stroke-width="1" />
<line x1="175.5" y1="211.5" x2="187.5" y2="211.5" stroke="#ff00ff" stroke-width="1" />
<line x1="174.5" y1="201.5" x2="174.5" y2="221.5" stroke="#ff00ff" stroke-width="1" />
<line x1="481.5" y1="211.5" x2="503.5" y2="211.5" stroke="#ff00ff" stroke-width="1" />
<line x1="493.5" y1="201.5" x2="493.5" y2="221.5" stroke="#ff00ff" stroke-width="1" />
<line x1="175.5" y1="370.5" x2="187.5" y2="370.5" stroke="#ff00ff" stroke-width="1" />
<line x1="174.5" y1="360.5" x2="174.5" y2="380.5" stroke="#ff00ff" stroke-width="1" />
<line x1="481.5" y1="370.5" x2="503.5" y2="370.5" stroke="#ff00ff" stroke-width="1" />
<line x1="493.5" y1="360.5" x2="493.5" y2="380.5" stroke="#ff00ff" stroke-width="1" />
<line x1="175.5" y1="406.5" x2="187.5" y2="406.5" stroke="#ff00ff" stroke-width="1" />
<line x1="174.5" y1="396.5" x2="174.5" y2="416.5" stroke="#ff00ff" stroke-width="1" />
<line x1="481.5" y1="406.5" x2="503.5" y2="406.5" stroke="#ff00ff" stroke-width="1" />
<line x1="493.5" y1="396.5" x2="493.5" y2="416.5" stroke="#ff00ff" stroke-width="1" />
<line x1="175.5" y1="442.5" x2="187.5" y2="442.5" stroke="#ff00ff" stroke-width="1" />
<line x1="174.5" y1="432.5" x2="174.5" y2="452.5" stroke="#ff00ff" stroke-width="1" />
<line x1="481.5" y1="442.5" x2="503.5" y2="442.5" stroke="#ff00ff" stroke-width="1" />
<line x1="493.5" y1="432.5" x2="493.5" y2="452.5" stroke="#ff00ff" stroke-width="1" />
</g>
<path d="M173.5,258.5 L168.5,258.5 Q167.5,258.5 167.5,261.5 L167.5,270.5 Q167.5,273.5 168.5,273.5 L173.5,273.5" stroke="#ffffff" fill="none" />
<path d="M173.5,308.5 L168.5,308.5 Q167.5,308.5 167.5,311.5 L167.5,319.5 Q167.5,322.5 168.5,322.5 L173.5,322.5" stroke="#ffffff" fill="none" />
<g shape-rendering="crispEdges">
<line x1="162.5" y1="266.5" x2="179.5" y2="266.5" stroke="#ff00ff" stroke-width="1" />
<line x1="162.5" y1="315.5" x2="179.5" y2="315.5" stroke="#ff00ff" stroke-width="1" />
<line x1="488.5" y1="266.5" x2="506.5" y2="266.5" stroke="#ff00ff" stroke-width="1" />
<line x1="486.5" y1="315.5" x2="501.5" y2="315.5" stroke="#ff00ff" stroke-width="1" />
</g>
<path d="M495.5,258.5 L500.5,258.5 Q501.5,258.5 501.5,261.5 L501.5,270.5 Q501.5,273.5 500.5,273.5 L495.5,273.5" stroke="#ffffff" fill="none" />
<path d="M495.5,308.5 L500.5,308.5 Q501.5,308.5 501.5,311.5 L501.5,319.5 Q501.5,322.5 500.5,322.5 L495.5,322.5" stroke="#ffffff" fill="none" />
<g shape-rendering="crispEdges">
<line x1="495.5" y1="259.5" x2="503.5" y2="259.5" stroke="#ffffff" stroke-width="1" />
<line x1="495.5" y1="264.5" x2="503.5" y2="264.5" stroke="#ffffff" stroke-width="1" />
<line x1="495.5" y1="269.5" x2="503.5" y2="269.5" stroke="#ffffff" stroke-width="1" />
<line x1="495.5" y1="274.5" x2="503.5" y2="274.5" stroke="#ffffff" stroke-width="1" />
<line x1="495.5" y1="279.5" x2="503.5" y2="279.5" stroke="#ffffff" stroke-width="1" />
<line x1="495.5" y1="284.5" x2="503.5" y2="284.5" stroke="#ffffff" stroke-width="1" />
<line x1="495.5" y1="295.5" x2="503.5" y2="295.5" stroke="#ffffff" stroke-width="1" />
<line x1="495.5" y1="300.5" x2="503.5" y2="300.5" stroke="#ffffff" stroke-width="1" />
<line x1="495.5" y1="305.5" x2="503.5" y2="305.5" stroke="#ffffff" stroke-width="1" />
<line x1="495.5" y1="310.5" x2="503.5" y2="310.5" stroke="#ffffff" stroke-width="1" />
<line x1="495.5" y1="315.5" x2="503.5" y2="315.5" stroke="#ffffff" stroke-width="1" />
<line x1="495.5" y1="320.5" x2="503.5" y2="320.5" stroke="#ffffff" stroke-width="1" />
</g>
<line x1="173.5" y1="290.5" x2="565.5" y2="290.5" stroke="#ff00ff" stroke-dasharray="16 4 3 4" stroke-dashoffset="0"/>
<g shape-rendering="crispEdges">
<line x1="374.5" y1="290.5" x2="450.5" y2="290.5" stroke="#00ffff" stroke-width="1" />
<line x1="245.5" y1="290.5" x2="250.5" y2="290.5" stroke="#00ffff" stroke-width="1" />
</g>
<path d="M173.5,328.5 L207.5,328.5 L207.5,350 L190.5,350 L190.5,365 L183.5,365 L183.5,350 L173.5,350 Z" fill="url(#hat)" stroke="none"/>
<path d="M469.5,328.5 L495.5,328.5 L495.5,355 L484.5,355 L484.5,365 L477.5,365 L477.5,355 L469.5,355 Z" fill="url(#xhat)" stroke="none"/>
<path d="M207.5,328.5 L215.5,328.5 L215.5,349 L207.5,349 Z" fill="url(#hat)" stroke="none"/>
<path d="M215.5,347.5 L250.5,347.5 L250.5,416 Q250.5,426.5 261,426.5 L360,426.5 Q371.5,426.5 371.5,416 L371.5,347.5 L412.5,347.5 L412.5,469.5 L406.5,469.5 L406.5,502.5 L393.5,502.5 L381,485.5 L366,474 L343.5,461 L317,454.5 L292.5,454.5 L268,460 L241.5,476 L224.5,491 L216,502.5 L202.5,502.5 L202.5,426.5 L215.5,426.5 Z" fill="url(#hat)" stroke="none"/>
<path d="M412.5,365.5 L423.5,365.5 L423.5,469.5 L412.5,469.5 Z" fill="url(#hat2)" stroke="none"/>
<path d="M410,469.5 L423.5,469.5 L423.5,473.5 L467.5,473.5 L467.5,489 L410,489 Z" fill="url(#hat2)" stroke="none"/>
<path d="M220.5,331.5 L250.5,331.5 L250.5,347.5 L220.5,347.5 Z" fill="url(#hat)" stroke="none"/>
<path d="M370.5,331.5 L400.5,331.5 L400.5,347.5 L370.5,347.5 Z" fill="url(#hat)" stroke="none"/>
<path d="M408,331.5 L414,331.5 L414,347.5 L408,347.5 Z" fill="url(#hat)" stroke="none"/>
<path d="M414,345 L423.5,345 L423.5,347.5 L414,347.5 Z" fill="url(#hat)" stroke="none"/>
<path d="M173.5,328.5 L207.5,328.5 L207.5,349.5 L190.5,349.5 L190.5,365.5 M183.5,365.5 L183.5,349.5 L173.5,349.5 L173.5,328.5" stroke="#ffffff" fill="none" />
<path d="M469.5,328.5 L495.5,328.5 L495.5,354.5 L484.5,354.5 L484.5,365.5 L477.5,365.5 L477.5,354.5 L469.5,354.5" stroke="#ffffff" fill="none" />
<path d="M183.5,365.5 L190.5,365.5" stroke="#ffffff" fill="none" />
<path d="M215.5,331 L215.5,426.5 L202.5,426.5 L202.5,502.5 L215.5,502.5" stroke="#ffffff" fill="none" />
<path d="M393.5,502.5 L381,485.5 L366,474 L343.5,461 L317,454.5 L292.5,454.5 L268,460 L241.5,476 L224.5,491 L216,502.5" stroke="#ffffff" fill="none" />
<path d="M250.5,331 L250.5,416 Q250.5,426.5 261,426.5 L360,426.5 Q371.5,426.5 371.5,416 L371.5,331" stroke="#ffffff" fill="none" />
<path d="M393.5,502.5 L406.5,502.5 L406.5,469.5 L423.5,469.5 M412.5,365.5 L412.5,469.5 M405.5,365.5 L423.5,365.5" stroke="#ffffff" fill="none" />
<path d="M423.5,331.5 L423.5,473.5 L467.5,473.5 L467.5,489 M408.5,469.5 L408.5,505.5 M406.5,502.5 L406.5,505.5" stroke="#ffffff" fill="none" />
<path d="M409.5,496.5 L467.5,496.5" stroke="#ff00ff" fill="none" stroke-dasharray="10 3 3 3"/>
<path d="M410.5,502.5 L465.5,502.5" stroke="#ffffff" fill="none" />
<g shape-rendering="crispEdges">
<line x1="164.5" y1="290.5" x2="164.5" y2="454.5" stroke="#ffffff" stroke-width="1" />
<line x1="183.5" y1="365.5" x2="183.5" y2="454.5" stroke="#ffffff" stroke-width="1" />
<line x1="190.5" y1="350.5" x2="190.5" y2="454.5" stroke="#ffffff" stroke-width="1" />
<line x1="201.5" y1="351.5" x2="201.5" y2="425.5" stroke="#ffffff" stroke-width="1" />
<line x1="207.5" y1="290.5" x2="207.5" y2="328.5" stroke="#ffffff" stroke-width="1" />
<line x1="220.5" y1="290.5" x2="220.5" y2="331.5" stroke="#ffffff" stroke-width="1" />
<line x1="250.5" y1="290.5" x2="250.5" y2="331.5" stroke="#ffffff" stroke-width="1" />
<line x1="254.5" y1="290.5" x2="254.5" y2="331.5" stroke="#ffffff" stroke-width="1" />
<line x1="365.5" y1="290.5" x2="365.5" y2="331.5" stroke="#ffffff" stroke-width="1" />
<line x1="370.5" y1="290.5" x2="370.5" y2="331.5" stroke="#ffffff" stroke-width="1" />
<line x1="400.5" y1="290.5" x2="400.5" y2="331.5" stroke="#ffffff" stroke-width="1" />
<line x1="254.5" y1="331.5" x2="365.5" y2="331.5" stroke="#ffffff" stroke-width="1" />
<line x1="250.5" y1="347.5" x2="371.5" y2="347.5" stroke="#ffffff" stroke-width="1" />
<line x1="400.5" y1="331.5" x2="469.5" y2="331.5" stroke="#ffffff" stroke-width="1" />
<line x1="477.5" y1="365.5" x2="477.5" y2="454.5" stroke="#ffffff" stroke-width="1" />
<line x1="484.5" y1="365.5" x2="484.5" y2="454.5" stroke="#ffffff" stroke-width="1" />
<line x1="469.5" y1="328.5" x2="469.5" y2="505.5" stroke="#ffffff" stroke-width="1" />
<line x1="467.5" y1="330.5" x2="467.5" y2="505.5" stroke="#ffffff" stroke-width="1" />
<line x1="455.5" y1="329.5" x2="467.5" y2="329.5" stroke="#ffffff" stroke-width="1" />
</g>
<ellipse cx="226" cy="338.5" rx="5.5" ry="4.5" fill="#000" stroke="#ffffff"/>
<ellipse cx="239" cy="338.5" rx="5.5" ry="4.5" fill="#000" stroke="#ffffff"/>
<ellipse cx="382" cy="338.5" rx="5.5" ry="4.5" fill="#000" stroke="#ffffff"/>
<ellipse cx="395" cy="338.5" rx="5.5" ry="4.5" fill="#000" stroke="#ffffff"/>
<path d="M221,338.5 L247,338.5" stroke="#00ff00" fill="none" stroke-dasharray="4 2"/>
<path d="M377,338.5 L403,338.5" stroke="#00ff00" fill="none" stroke-dasharray="4 2"/>
<path d="M202.5,351.5 L209.5,351.5 L209.5,362.5 L202.5,362.5 Z M203,355.5 L209,355.5 M203,359.5 L209,359.5" stroke="#ffffff" fill="#000" />
<path d="M209.5,353.5 L229.5,353.5 M229.5,360.5 L209.5,360.5" stroke="#ff00ff" fill="none" />
<path d="M229.5,353.5 L232.5,357 L229.5,360.5" stroke="#ffffff" fill="none" />
<path d="M191,357.5 L234,357.5" stroke="#ff00ff" fill="none" />
<path d="M420.5,351.5 L413.5,351.5 L413.5,362.5 L420.5,362.5 Z M414,355.5 L420,355.5 M414,359.5 L420,359.5" stroke="#ffffff" fill="#000" />
<rect x="391" y="353" width="22" height="8" fill="#000"/>
<path d="M413.5,353.5 L393.5,353.5 M393.5,360.5 L413.5,360.5" stroke="#ff00ff" fill="none" />
<path d="M393.5,353.5 L390.5,357 L393.5,360.5" stroke="#ffffff" fill="none" />
<path d="M391,357.5 L428,357.5" stroke="#ff00ff" fill="none" />
<path d="M393.5,452.5 L423.5,452.5 L423.5,460.5 L393.5,460.5 Z" stroke="#ffffff" fill="#000" />
<path d="M395,453.5 L423,453.5" stroke="#ff0000" fill="none" />
<path d="M395,456.5 L430,456.5" stroke="#00ff00" fill="none" stroke-dasharray="5 2"/>
<path d="M423.5,449.5 L430.5,449.5 L431.5,452 L431.5,461 L430.5,463.5 L423.5,463.5 Z M423.5,456.5 L431.5,456.5" stroke="#ffffff" fill="none" />
<path d="M414.5,331.5 L414.5,344.5 L423.5,344.5" stroke="#ffffff" fill="none" />
<path d="M401.5,331.5 L401.5,341.5 Q401.5,344.5 404.5,344.5 L405.5,344.5 Q408.5,344.5 408.5,341.5 L408.5,331.5" stroke="#ffffff" fill="#000" />
<path d="M215.5,331.5 L215.5,343.5 Q215.5,345.5 217.5,345.5 L218.5,345.5 Q220.5,345.5 220.5,343.5 L220.5,331.5" stroke="#ffffff" fill="#000" />
<g shape-rendering="crispEdges">
<line x1="164.5" y1="454.5" x2="164.5" y2="532.5" stroke="#00ffff" stroke-width="1" />
<line x1="190.5" y1="454.5" x2="190.5" y2="532.5" stroke="#00ffff" stroke-width="1" />
<line x1="201.5" y1="449.5" x2="201.5" y2="532.5" stroke="#00ffff" stroke-width="1" />
<line x1="478.5" y1="454.5" x2="478.5" y2="532.5" stroke="#00ffff" stroke-width="1" />
<line x1="503.5" y1="447.5" x2="503.5" y2="532.5" stroke="#00ffff" stroke-width="1" />
<line x1="467.5" y1="446.5" x2="467.5" y2="532.5" stroke="#00ffff" stroke-width="1" />
<line x1="447.5" y1="373.5" x2="447.5" y2="469.5" stroke="#00ffff" stroke-width="1" />
<line x1="423.5" y1="469.5" x2="447.5" y2="469.5" stroke="#00ffff" stroke-width="1" />
</g>
<polyline points="186.6,447.7 209,572.5 226,572.5" stroke="#00ffff" fill="none"/>
<text x="217" y="569.5" fill="#00ff00" font-size="9"  text-anchor="middle" >1</text>
<polyline points="215.9,490.6 240.7,572.5 256.6,572.5" stroke="#00ffff" fill="none"/>
<text x="248" y="569.5" fill="#00ff00" font-size="9"  text-anchor="middle" >2</text>
<polyline points="205,362 272.5,572.5 303.3,572.5" stroke="#00ffff" fill="none"/>
<text x="280" y="569.5" fill="#00ff00" font-size="9"  text-anchor="middle" >3</text>
<polyline points="211,331 318,572.5 335,572.5" stroke="#00ffff" fill="none"/>
<text x="326" y="569.5" fill="#00ff00" font-size="9"  text-anchor="middle" >5</text>
<polyline points="232.5,346.4 354,572.5 370,572.5" stroke="#00ffff" fill="none"/>
<text x="361" y="569.5" fill="#00ff00" font-size="9"  text-anchor="middle" >6</text>
<polyline points="248,346.4 383,572.5 399,572.5" stroke="#00ffff" fill="none"/>
<text x="391" y="569.5" fill="#00ff00" font-size="9"  text-anchor="middle" >7</text>
<polyline points="365,331 416,572.5 464,572.5" stroke="#00ffff" fill="none"/>
<text x="423" y="569.5" fill="#00ff00" font-size="9"  text-anchor="middle" >8</text>
<polyline points="417.5,460.5 432.4,572.5" stroke="#00ffff" fill="none"/>
<text x="440" y="569.5" fill="#00ff00" font-size="9"  text-anchor="middle" >9</text>
<polyline points="456.6,484.3 478,572.5 494,572.5" stroke="#00ffff" fill="none"/>
<text x="486" y="569.5" fill="#00ff00" font-size="9"  text-anchor="middle" >11</text>
<text x="296" y="569.5" fill="#00ff00" font-size="9"  text-anchor="middle" >4</text>
<text x="455" y="569.5" fill="#00ff00" font-size="9"  text-anchor="middle" >10</text>
<polyline points="443,253.5 531,261.5 551,261.5" stroke="#00ffff" fill="none"/>
<text x="543" y="258.5" fill="#00ff00" font-size="9"  text-anchor="middle" >17</text>
<polyline points="501.7,315.3 533,306.5 551,306.5" stroke="#00ffff" fill="none"/>
<text x="543" y="304" fill="#00ff00" font-size="9"  text-anchor="middle" >16</text>
<polyline points="409.5,344.6 531,330.5 551,330.5" stroke="#00ffff" fill="none"/>
<text x="543" y="327" fill="#00ff00" font-size="9"  text-anchor="middle" >15</text>
<polyline points="413,351.8 531,346.5 551,346.5" stroke="#00ffff" fill="none"/>
<text x="543" y="343.5" fill="#00ff00" font-size="9"  text-anchor="middle" >14</text>
<polyline points="487,394.5 535.5,410.5 551,410.5" stroke="#00ffff" fill="none"/>
<text x="543" y="394.5" fill="#00ff00" font-size="9"  text-anchor="middle" >13</text>
<rect x="535.5" y="396.5" width="16" height="14" stroke="#00ffff" fill="none"/>
<text x="543" y="407" fill="#00ff00" font-size="9"  text-anchor="middle" >12</text>
<circle cx="487.5" cy="394.5" r="2.3" stroke="#ffffff" fill="none"/>
<g shape-rendering="crispEdges">
<line x1="476.5" y1="394.5" x2="487.5" y2="394.5" stroke="#ff00ff" stroke-width="1" />
<line x1="164.5" y1="532.5" x2="190.5" y2="532.5" stroke="#00ffff" stroke-width="1" />
<line x1="190.5" y1="532.5" x2="201.5" y2="532.5" stroke="#00ffff" stroke-width="1" />
<line x1="201.5" y1="530.5" x2="402.5" y2="530.5" stroke="#00ffff" stroke-width="1" />
<line x1="409.5" y1="530.5" x2="467.5" y2="530.5" stroke="#00ffff" stroke-width="1" />
<line x1="477.5" y1="530.5" x2="503.5" y2="530.5" stroke="#00ffff" stroke-width="1" />
<line x1="404.5" y1="500.5" x2="404.5" y2="545.5" stroke="#00ffff" stroke-width="1" />
<line x1="409.5" y1="500.5" x2="409.5" y2="545.5" stroke="#00ffff" stroke-width="1" />
<line x1="386.5" y1="542.5" x2="415.5" y2="542.5" stroke="#00ffff" stroke-width="1" />
<line x1="467.5" y1="542.5" x2="477.5" y2="542.5" stroke="#00ffff" stroke-width="1" />
<line x1="467.5" y1="532.5" x2="467.5" y2="547.5" stroke="#00ffff" stroke-width="1" />
<line x1="477.5" y1="532.5" x2="477.5" y2="547.5" stroke="#00ffff" stroke-width="1" />
</g>
<text x="177" y="530" fill="#00ff00" font-size="8" font-weight="bold" text-anchor="middle" textLength="9" lengthAdjust="spacingAndGlyphs">90</text>
<text x="196" y="530" fill="#00ff00" font-size="8" font-weight="bold" text-anchor="middle" textLength="8" lengthAdjust="spacingAndGlyphs">38</text>
<text x="304" y="528" fill="#00ff00" font-size="8" font-weight="bold" text-anchor="middle" textLength="14" lengthAdjust="spacingAndGlyphs">701</text>
<text x="391" y="540" fill="#00ff00" font-size="8" font-weight="bold" text-anchor="middle" textLength="9" lengthAdjust="spacingAndGlyphs">15</text>
<text x="438" y="527" fill="#00ff00" font-size="8" font-weight="bold" text-anchor="middle" textLength="13" lengthAdjust="spacingAndGlyphs">200</text>
<text x="490" y="527" fill="#00ff00" font-size="8" font-weight="bold" text-anchor="middle" textLength="9" lengthAdjust="spacingAndGlyphs">90</text>
<text x="472" y="541" fill="#00ff00" font-size="8" font-weight="bold" text-anchor="middle" textLength="8" lengthAdjust="spacingAndGlyphs">47</text>
<g shape-rendering="crispEdges">
<line x1="193.5" y1="292.5" x2="193.5" y2="328.5" stroke="#00ffff" stroke-width="1" />
<line x1="217.5" y1="301.5" x2="217.5" y2="328.5" stroke="#00ffff" stroke-width="1" />
<line x1="232.5" y1="306.5" x2="232.5" y2="347.5" stroke="#00ffff" stroke-width="1" />
<line x1="246.5" y1="299.5" x2="246.5" y2="331.5" stroke="#00ffff" stroke-width="1" />
<line x1="387.5" y1="299.5" x2="387.5" y2="331.5" stroke="#00ffff" stroke-width="1" />
<line x1="419.5" y1="306.5" x2="419.5" y2="345.5" stroke="#00ffff" stroke-width="1" />
<line x1="483.5" y1="292.5" x2="483.5" y2="328.5" stroke="#00ffff" stroke-width="1" />
</g>
<text x="0" y="0" fill="#00ff00" font-size="7.5" font-weight="bold" text-anchor="middle" textLength="31" lengthAdjust="spacingAndGlyphs" transform="translate(191.5,307) rotate(-90)">Ø280H7/h6</text>
<text x="0" y="0" fill="#00ff00" font-size="7.5" font-weight="bold" text-anchor="middle" textLength="15" lengthAdjust="spacingAndGlyphs" transform="translate(216.5,311) rotate(-90)">Ø270</text>
<text x="0" y="0" fill="#00ff00" font-size="7.5" font-weight="bold" text-anchor="middle" textLength="25" lengthAdjust="spacingAndGlyphs" transform="translate(231.5,319) rotate(-90)">Ø310H7</text>
<text x="0" y="0" fill="#00ff00" font-size="7.5" font-weight="bold" text-anchor="middle" textLength="25" lengthAdjust="spacingAndGlyphs" transform="translate(245.5,314) rotate(-90)">Ø280k6</text>
<text x="0" y="0" fill="#00ff00" font-size="7.5" font-weight="bold" text-anchor="middle" textLength="25" lengthAdjust="spacingAndGlyphs" transform="translate(386.5,314) rotate(-90)">Ø280k6</text>
<text x="0" y="0" fill="#00ff00" font-size="7.5" font-weight="bold" text-anchor="middle" textLength="25" lengthAdjust="spacingAndGlyphs" transform="translate(418.5,319) rotate(-90)">Ø310H7</text>
<text x="0" y="0" fill="#00ff00" font-size="7.5" font-weight="bold" text-anchor="middle" textLength="31" lengthAdjust="spacingAndGlyphs" transform="translate(481.5,309) rotate(-90)">Ø280H7/h6</text>
<text x="0" y="0" fill="#00ff00" font-size="7.5" font-weight="bold" text-anchor="middle" textLength="12" lengthAdjust="spacingAndGlyphs" transform="translate(446,380) rotate(-90)">816</text>
<path d="M469.5,171 L484.5,171 L484.5,196 L469.5,196 Z" fill="url(#xhat)"/>
<rect x="470" y="182" width="7" height="11" fill="#000"/>
<path d="M469.5,170 Q461,170 459,178 Q457.5,186 460,190 Q463,195 469.5,195" stroke="#ffffff" fill="none" />
<g shape-rendering="crispEdges">
<line x1="469.5" y1="170.5" x2="485.5" y2="170.5" stroke="#ffffff" stroke-width="1" />
<line x1="469.5" y1="196.5" x2="485.5" y2="196.5" stroke="#ffffff" stroke-width="1" />
</g>
<rect x="467.5" y="184.5" width="21" height="5" fill="#000" stroke="#fff"/>
<rect x="468" y="185.5" width="17" height="2" fill="#f0f"/>
<line x1="791.5" y1="79.5" x2="791.5" y2="352.5" stroke="#ff00ff" stroke-dasharray="14 3 3 3" stroke-dashoffset="0"/>
<line x1="687.5" y1="204.5" x2="883.5" y2="204.5" stroke="#ff00ff" stroke-dasharray="14 3 3 3" stroke-dashoffset="0"/>
<g shape-rendering="crispEdges">
<line x1="883.5" y1="204.5" x2="962.5" y2="204.5" stroke="#00ffff" stroke-width="1" />
</g>
<path d="M765,265.5 A66.5,66.5 0 1 1 818,265.5 L802,267.5 L781,267.5 Z" stroke="#ffffff" fill="none" />
<path d="M772,264 A63,63 0 1 1 811,264" stroke="#ffffff" fill="none" />
<path d="M764.7,229.6 A37.4,37.4 0 1 1 817.5,229.6" stroke="#ffffff" fill="none" />
<path d="M764.7,229.6 Q767,231 768,232.4 M817.5,229.6 Q815,231 814,232.4" stroke="#ffffff" fill="none" />
<path d="M751.9,150.6 L700,203 Q690,214 682.2,229.6 Q673,250 669.3,273 Q667.5,293 671.1,317.2 L673.5,347.5 L745.9,347.5 L751.3,341.6 L831.6,341.6 L837.5,347.5 L883.4,347.5" stroke="#ffffff" fill="none" />
<path d="M831.2,152.8 Q880,176 901.3,195.2 Q918,215 915.5,239.5 Q913,258 909.2,269 Q900,295 896.3,309.6 L896.3,347.5" stroke="#ffffff" fill="none" />
<g shape-rendering="crispEdges">
<line x1="671.5" y1="317.5" x2="896.5" y2="317.5" stroke="#ffffff" stroke-width="1" />
<line x1="732.5" y1="230.5" x2="850.5" y2="230.5" stroke="#ffffff" stroke-width="1" />
<line x1="746.5" y1="252.5" x2="834.5" y2="252.5" stroke="#ffffff" stroke-width="1" />
</g>
<rect x="752.5" y="232.5" width="78" height="18" stroke="#fff" fill="none"/>
<polygon points="772.8,241.3 769.6,246.8 763.4,246.8 760.2,241.3 763.4,235.8 769.6,235.8" stroke="#fff" fill="none"/>
<path d="M755.5,241.5 L776.5,241.5 M766.5,230 L766.5,252" stroke="#ff00ff" fill="none" />
<polygon points="822.8,241.3 819.6,246.8 813.4,246.8 810.2,241.3 813.4,235.8 819.6,235.8" stroke="#fff" fill="none"/>
<path d="M805.5,241.5 L826.5,241.5 M816.5,230 L816.5,252" stroke="#ff00ff" fill="none" />
<polyline points="774.5,268.5 780.5,279.5 780.5,306.5 775.5,317.5" stroke="#ffffff" fill="none" />
<polyline points="779.5,268.5 784.5,276.5 784.5,306.5 779.5,317.5" stroke="#ffffff" fill="none" />
<polyline points="803.5,268.5 799.5,276.5 799.5,306.5 803.5,317.5" stroke="#ffffff" fill="none" />
<polyline points="809.5,268.5 803.5,279.5 803.5,306.5 808.5,317.5" stroke="#ffffff" fill="none" />
<circle cx="688.6" cy="241.0" r="3.3" stroke="#ffffff" fill="none"/>
<path d="M683.6,241 L693.6,241 M688.6,236 L688.6,246" stroke="#ff00ff" fill="none" />
<circle cx="895.4" cy="241.0" r="3.3" stroke="#ffffff" fill="none"/>
<path d="M890.4,241 L900.4,241 M895.4,236 L895.4,246" stroke="#ff00ff" fill="none" />
<path d="M698,319.5 L707.5,319.5 L707.5,347.5 L699,347.5 Q693,342 693,336 Q693,330 698,325 Z" fill="url(#xhat)"/>
<path d="M716.5,317.5 L731,317.5 Q734,322 734,330 Q734,338 728,347.5 L716.5,347.5 Z" fill="url(#xhat)"/>
<path d="M698,319.5 Q693,330 693,336 Q693,342 699,347.5 M707.5,319.5 L707.5,347.5 M716.5,319.5 L716.5,347.5 M730,317.5 Q734,322 734,330 Q734,338 728,347.5" stroke="#ffffff" fill="none" />
<g shape-rendering="crispEdges">
<line x1="693.5" y1="319.5" x2="707.5" y2="319.5" stroke="#ffffff" stroke-width="1" />
<line x1="717.5" y1="319.5" x2="745.5" y2="319.5" stroke="#ffffff" stroke-width="1" />
</g>
<path d="M712.5,313 L712.5,353" stroke="#ff00ff" fill="none" stroke-dasharray="6 2 2 2"/>
<path d="M870.5,312 L870.5,352" stroke="#ff00ff" fill="none" stroke-dasharray="10 3 3 3"/>
<g shape-rendering="crispEdges">
<line x1="883.5" y1="347.5" x2="962.5" y2="347.5" stroke="#00ffff" stroke-width="1" />
<line x1="959.5" y1="204.5" x2="959.5" y2="347.5" stroke="#00ffff" stroke-width="1" />
<line x1="895.5" y1="241.5" x2="936.5" y2="241.5" stroke="#00ffff" stroke-width="1" />
<line x1="932.5" y1="241.5" x2="932.5" y2="347.5" stroke="#00ffff" stroke-width="1" />
<line x1="688.5" y1="245.5" x2="688.5" y2="394.5" stroke="#00ffff" stroke-width="1" />
<line x1="895.5" y1="245.5" x2="895.5" y2="394.5" stroke="#00ffff" stroke-width="1" />
<line x1="688.5" y1="391.5" x2="895.5" y2="391.5" stroke="#00ffff" stroke-width="1" />
<line x1="766.5" y1="245.5" x2="766.5" y2="375.5" stroke="#00ffff" stroke-width="1" />
<line x1="816.5" y1="245.5" x2="816.5" y2="375.5" stroke="#00ffff" stroke-width="1" />
<line x1="766.5" y1="372.5" x2="816.5" y2="372.5" stroke="#00ffff" stroke-width="1" />
<line x1="703.5" y1="302.5" x2="703.5" y2="317.5" stroke="#00ffff" stroke-width="1" />
<line x1="720.5" y1="302.5" x2="720.5" y2="317.5" stroke="#00ffff" stroke-width="1" />
<line x1="703.5" y1="305.5" x2="749.5" y2="305.5" stroke="#00ffff" stroke-width="1" />
<line x1="707.5" y1="347.5" x2="707.5" y2="365.5" stroke="#00ffff" stroke-width="1" />
<line x1="716.5" y1="347.5" x2="716.5" y2="365.5" stroke="#00ffff" stroke-width="1" />
<line x1="701.5" y1="361.5" x2="748.5" y2="361.5" stroke="#00ffff" stroke-width="1" />
<line x1="695.5" y1="304.5" x2="695.5" y2="327.5" stroke="#00ffff" stroke-width="1" />
<line x1="690.5" y1="318.5" x2="700.5" y2="318.5" stroke="#00ffff" stroke-width="1" />
</g>
<text x="735" y="304" fill="#00ff00" font-size="8" font-weight="bold" text-anchor="middle" textLength="20" lengthAdjust="spacingAndGlyphs">12-Ø58</text>
<text x="735" y="360" fill="#00ff00" font-size="8" font-weight="bold" text-anchor="middle" textLength="20" lengthAdjust="spacingAndGlyphs">12-Ø30</text>
<text x="791" y="371" fill="#00ff00" font-size="8" font-weight="bold" text-anchor="middle" textLength="12" lengthAdjust="spacingAndGlyphs">171</text>
<text x="792" y="390" fill="#00ff00" font-size="8" font-weight="bold" text-anchor="middle" textLength="13" lengthAdjust="spacingAndGlyphs">714</text>
<text x="0" y="0" fill="#00ff00" font-size="7.5" text-anchor="middle" textLength="13" lengthAdjust="spacingAndGlyphs" transform="translate(958,277) rotate(-90)">498</text>
<text x="0" y="0" fill="#00ff00" font-size="7.5" text-anchor="middle" textLength="13" lengthAdjust="spacingAndGlyphs" transform="translate(930,295) rotate(-90)">398</text>
<text x="0" y="0" fill="#00ff00" font-size="7.5" text-anchor="middle" textLength="4" lengthAdjust="spacingAndGlyphs" transform="translate(693,309) rotate(-90)">6</text>
<path d="M601,220.5 L620.5,220.5 L757,237" stroke="#00ffff" fill="none" />
<text x="609" y="218.5" fill="#00ff00" font-size="9.5"  text-anchor="middle" textLength="9" lengthAdjust="spacingAndGlyphs">18</text>
<use href="#hz2" x="0" y="0" width="10" height="10" transform="translate(677.0,552.5) scale(0.8,1.0)" style="color:#1e50ff"/>
<use href="#hz1" x="0" y="0" width="10" height="10" transform="translate(688.5,552.5) scale(0.8,1.0)" style="color:#1e50ff"/>
<use href="#hz1" x="0" y="0" width="10" height="10" transform="translate(700.0,552.5) scale(0.8,1.0)" style="color:#1e50ff"/>
<use href="#hz0" x="0" y="0" width="10" height="10" transform="translate(711.5,552.5) scale(0.8,1.0)" style="color:#1e50ff"/>
<text x="606.5" y="584.3" fill="#1e50ff" font-size="10.625" textLength="6.2" lengthAdjust="spacingAndGlyphs">1.</text>
<use href="#hz1" x="0" y="0" width="10" height="10" transform="translate(612.7,575.8) scale(0.5276923076923077,0.85)" style="color:#1e50ff"/>
<use href="#hz0" x="0" y="0" width="10" height="10" transform="translate(618.9769230769231,575.8) scale(0.5276923076923077,0.85)" style="color:#1e50ff"/>
<use href="#hz2" x="0" y="0" width="10" height="10" transform="translate(625.2538461538461,575.8) scale(0.5276923076923077,0.85)" style="color:#1e50ff"/>
<use href="#hz1" x="0" y="0" width="10" height="10" transform="translate(631.5307692307691,575.8) scale(0.5276923076923077,0.85)" style="color:#1e50ff"/>
<use href="#hz0" x="0" y="0" width="10" height="10" transform="translate(637.8076923076922,575.8) scale(0.5276923076923077,0.85)" style="color:#1e50ff"/>
<use href="#hz2" x="0" y="0" width="10" height="10" transform="translate(644.0846153846152,575.8) scale(0.5276923076923077,0.85)" style="color:#1e50ff"/>
<use href="#hz1" x="0" y="0" width="10" height="10" transform="translate(650.3615384615382,575.8) scale(0.5276923076923077,0.85)" style="color:#1e50ff"/>
<text x="656.6" y="584.3" fill="#1e50ff" font-size="10.625" textLength="3.1" lengthAdjust="spacingAndGlyphs">,</text>
<use href="#hz1" x="0" y="0" width="10" height="10" transform="translate(659.7384615384613,575.8) scale(0.5276923076923077,0.85)" style="color:#1e50ff"/>
<use href="#hz0" x="0" y="0" width="10" height="10" transform="translate(666.0153846153843,575.8) scale(0.5276923076923077,0.85)" style="color:#1e50ff"/>
<use href="#hz2" x="0" y="0" width="10" height="10" transform="translate(672.2923076923073,575.8) scale(0.5276923076923077,0.85)" style="color:#1e50ff"/>
<use href="#hz0" x="0" y="0" width="10" height="10" transform="translate(678.5692307692303,575.8) scale(0.5276923076923077,0.85)" style="color:#1e50ff"/>
<use href="#hz2" x="0" y="0" width="10" height="10" transform="translate(684.8461538461534,575.8) scale(0.5276923076923077,0.85)" style="color:#1e50ff"/>
<use href="#hz1" x="0" y="0" width="10" height="10" transform="translate(691.1230769230764,575.8) scale(0.5276923076923077,0.85)" style="color:#1e50ff"/>
<text x="697.4" y="584.3" fill="#1e50ff" font-size="10.625" textLength="3.1" lengthAdjust="spacingAndGlyphs">.</text>
<text x="606.5" y="600.0" fill="#1e50ff" font-size="10.625" textLength="6.2" lengthAdjust="spacingAndGlyphs">2.</text>
<use href="#hz1" x="0" y="0" width="10" height="10" transform="translate(612.7,591.5) scale(0.5007142857142857,0.85)" style="color:#1e50ff"/>
<use href="#hz1" x="0" y="0" width="10" height="10" transform="translate(618.7071428571429,591.5) scale(0.5007142857142857,0.85)" style="color:#1e50ff"/>
<use href="#hz2" x="0" y="0" width="10" height="10" transform="translate(624.7142857142858,591.5) scale(0.5007142857142857,0.85)" style="color:#1e50ff"/>
<use href="#hz2" x="0" y="0" width="10" height="10" transform="translate(630.7214285714286,591.5) scale(0.5007142857142857,0.85)" style="color:#1e50ff"/>
<use href="#hz2" x="0" y="0" width="10" height="10" transform="translate(636.7285714285715,591.5) scale(0.5007142857142857,0.85)" style="color:#1e50ff"/>
<use href="#hz2" x="0" y="0" width="10" height="10" transform="translate(642.7357142857144,591.5) scale(0.5007142857142857,0.85)" style="color:#1e50ff"/>
<use href="#hz2" x="0" y="0" width="10" height="10" transform="translate(648.7428571428572,591.5) scale(0.5007142857142857,0.85)" style="color:#1e50ff"/>
<use href="#hz2" x="0" y="0" width="10" height="10" transform="translate(654.7500000000001,591.5) scale(0.5007142857142857,0.85)" style="color:#1e50ff"/>
<use href="#hz2" x="0" y="0" width="10" height="10" transform="translate(660.757142857143,591.5) scale(0.5007142857142857,0.85)" style="color:#1e50ff"/>
<use href="#hz2" x="0" y="0" width="10" height="10" transform="translate(666.7642857142858,591.5) scale(0.5007142857142857,0.85)" style="color:#1e50ff"/>
<use href="#hz2" x="0" y="0" width="10" height="10" transform="translate(672.7714285714287,591.5) scale(0.5007142857142857,0.85)" style="color:#1e50ff"/>
<use href="#hz2" x="0" y="0" width="10" height="10" transform="translate(678.7785714285716,591.5) scale(0.5007142857142857,0.85)" style="color:#1e50ff"/>
<text x="684.8" y="600.0" fill="#1e50ff" font-size="10.625" textLength="49.6" lengthAdjust="spacingAndGlyphs">(SH/T 1368-1992)</text>
<use href="#hz1" x="0" y="0" width="10" height="10" transform="translate(734.3857142857148,591.5) scale(0.5007142857142857,0.85)" style="color:#1e50ff"/>
<use href="#hz1" x="0" y="0" width="10" height="10" transform="translate(740.3928571428577,591.5) scale(0.5007142857142857,0.85)" style="color:#1e50ff"/>
<text x="746.4" y="600.0" fill="#1e50ff" font-size="10.625" textLength="3.1" lengthAdjust="spacingAndGlyphs">,</text>
<use href="#hz2" x="0" y="0" width="10" height="10" transform="translate(611.5,607.5) scale(0.5131578947368421,0.85)" style="color:#1e50ff"/>
<use href="#hz0" x="0" y="0" width="10" height="10" transform="translate(617.6315789473684,607.5) scale(0.5131578947368421,0.85)" style="color:#1e50ff"/>
<use href="#hz1" x="0" y="0" width="10" height="10" transform="translate(623.7631578947369,607.5) scale(0.5131578947368421,0.85)" style="color:#1e50ff"/>
<use href="#hz2" x="0" y="0" width="10" height="10" transform="translate(629.8947368421053,607.5) scale(0.5131578947368421,0.85)" style="color:#1e50ff"/>
<use href="#hz0" x="0" y="0" width="10" height="10" transform="translate(636.0263157894738,607.5) scale(0.5131578947368421,0.85)" style="color:#1e50ff"/>
<use href="#hz1" x="0" y="0" width="10" height="10" transform="translate(642.1578947368422,607.5) scale(0.5131578947368421,0.85)" style="color:#1e50ff"/>
<use href="#hz2" x="0" y="0" width="10" height="10" transform="translate(648.2894736842106,607.5) scale(0.5131578947368421,0.85)" style="color:#1e50ff"/>
<use href="#hz2" x="0" y="0" width="10" height="10" transform="translate(654.4210526315791,607.5) scale(0.5131578947368421,0.85)" style="color:#1e50ff"/>
<use href="#hz0" x="0" y="0" width="10" height="10" transform="translate(660.5526315789475,607.5) scale(0.5131578947368421,0.85)" style="color:#1e50ff"/>
<use href="#hz1" x="0" y="0" width="10" height="10" transform="translate(666.684210526316,607.5) scale(0.5131578947368421,0.85)" style="color:#1e50ff"/>
<use href="#hz2" x="0" y="0" width="10" height="10" transform="translate(672.8157894736844,607.5) scale(0.5131578947368421,0.85)" style="color:#1e50ff"/>
<text x="678.9" y="616.0" fill="#1e50ff" font-size="10.625" textLength="3.1" lengthAdjust="spacingAndGlyphs">,</text>
<use href="#hz1" x="0" y="0" width="10" height="10" transform="translate(682.0473684210529,607.5) scale(0.5131578947368421,0.85)" style="color:#1e50ff"/>
<use href="#hz2" x="0" y="0" width="10" height="10" transform="translate(688.1789473684213,607.5) scale(0.5131578947368421,0.85)" style="color:#1e50ff"/>
<use href="#hz0" x="0" y="0" width="10" height="10" transform="translate(694.3105263157897,607.5) scale(0.5131578947368421,0.85)" style="color:#1e50ff"/>
<use href="#hz1" x="0" y="0" width="10" height="10" transform="translate(700.4421052631582,607.5) scale(0.5131578947368421,0.85)" style="color:#1e50ff"/>
<use href="#hz2" x="0" y="0" width="10" height="10" transform="translate(706.5736842105266,607.5) scale(0.5131578947368421,0.85)" style="color:#1e50ff"/>
<use href="#hz2" x="0" y="0" width="10" height="10" transform="translate(712.705263157895,607.5) scale(0.5131578947368421,0.85)" style="color:#1e50ff"/>
<use href="#hz0" x="0" y="0" width="10" height="10" transform="translate(718.8368421052635,607.5) scale(0.5131578947368421,0.85)" style="color:#1e50ff"/>
<use href="#hz1" x="0" y="0" width="10" height="10" transform="translate(724.9684210526319,607.5) scale(0.5131578947368421,0.85)" style="color:#1e50ff"/>
<text x="731.1" y="616.0" fill="#1e50ff" font-size="10.625" textLength="12.4" lengthAdjust="spacingAndGlyphs">2/3.</text>
<text x="606.5" y="630.3" fill="#1e50ff" font-size="10.625" textLength="6.2" lengthAdjust="spacingAndGlyphs">3.</text>
<use href="#hz1" x="0" y="0" width="10" height="10" transform="translate(612.7,621.8) scale(0.511578947368421,0.85)" style="color:#1e50ff"/>
<use href="#hz2" x="0" y="0" width="10" height="10" transform="translate(618.8157894736843,621.8) scale(0.511578947368421,0.85)" style="color:#1e50ff"/>
<text x="624.9" y="630.3" fill="#1e50ff" font-size="10.625" textLength="3.1" lengthAdjust="spacingAndGlyphs">(</text>
<use href="#hz1" x="0" y="0" width="10" height="10" transform="translate(628.0315789473685,621.8) scale(0.511578947368421,0.85)" style="color:#1e50ff"/>
<use href="#hz2" x="0" y="0" width="10" height="10" transform="translate(634.1473684210528,621.8) scale(0.511578947368421,0.85)" style="color:#1e50ff"/>
<text x="640.3" y="630.3" fill="#1e50ff" font-size="10.625" textLength="9.3" lengthAdjust="spacingAndGlyphs">17)</text>
<use href="#hz1" x="0" y="0" width="10" height="10" transform="translate(649.5631578947371,621.8) scale(0.511578947368421,0.85)" style="color:#1e50ff"/>
<use href="#hz2" x="0" y="0" width="10" height="10" transform="translate(655.6789473684213,621.8) scale(0.511578947368421,0.85)" style="color:#1e50ff"/>
<use href="#hz0" x="0" y="0" width="10" height="10" transform="translate(661.7947368421055,621.8) scale(0.511578947368421,0.85)" style="color:#1e50ff"/>
<use href="#hz1" x="0" y="0" width="10" height="10" transform="translate(667.9105263157898,621.8) scale(0.511578947368421,0.85)" style="color:#1e50ff"/>
<use href="#hz2" x="0" y="0" width="10" height="10" transform="translate(674.026315789474,621.8) scale(0.511578947368421,0.85)" style="color:#1e50ff"/>
<use href="#hz2" x="0" y="0" width="10" height="10" transform="translate(680.1421052631582,621.8) scale(0.511578947368421,0.85)" style="color:#1e50ff"/>
<use href="#hz0" x="0" y="0" width="10" height="10" transform="translate(686.2578947368424,621.8) scale(0.511578947368421,0.85)" style="color:#1e50ff"/>
<use href="#hz1" x="0" y="0" width="10" height="10" transform="translate(692.3736842105267,621.8) scale(0.511578947368421,0.85)" style="color:#1e50ff"/>
<use href="#hz2" x="0" y="0" width="10" height="10" transform="translate(698.4894736842109,621.8) scale(0.511578947368421,0.85)" style="color:#1e50ff"/>
<use href="#hz0" x="0" y="0" width="10" height="10" transform="translate(704.6052631578951,621.8) scale(0.511578947368421,0.85)" style="color:#1e50ff"/>
<text x="710.7" y="630.3" fill="#1e50ff" font-size="10.625" textLength="3.1" lengthAdjust="spacingAndGlyphs">,</text>
<use href="#hz1" x="0" y="0" width="10" height="10" transform="translate(713.8210526315794,621.8) scale(0.511578947368421,0.85)" style="color:#1e50ff"/>
<use href="#hz2" x="0" y="0" width="10" height="10" transform="translate(719.9368421052636,621.8) scale(0.511578947368421,0.85)" style="color:#1e50ff"/>
<use href="#hz0" x="0" y="0" width="10" height="10" transform="translate(726.0526315789479,621.8) scale(0.511578947368421,0.85)" style="color:#1e50ff"/>
<use href="#hz1" x="0" y="0" width="10" height="10" transform="translate(732.1684210526321,621.8) scale(0.511578947368421,0.85)" style="color:#1e50ff"/>
<use href="#hz1" x="0" y="0" width="10" height="10" transform="translate(738.2842105263163,621.8) scale(0.511578947368421,0.85)" style="color:#1e50ff"/>
<text x="744.4" y="630.3" fill="#1e50ff" font-size="10.625" textLength="3.1" lengthAdjust="spacingAndGlyphs">.</text>
<use href="#hz0" x="0" y="0" width="10" height="10" transform="translate(918.5,461.0) scale(0.55,0.65)" style="color:#00ff00"/>
<use href="#hz0" x="0" y="0" width="10" height="10" transform="translate(924.5,461.0) scale(0.55,0.65)" style="color:#00ff00"/>
<use href="#hz0" x="0" y="0" width="10" height="10" transform="translate(918.5,471.43) scale(0.55,0.65)" style="color:#00ff00"/>
<use href="#hz0" x="0" y="0" width="10" height="10" transform="translate(924.5,471.43) scale(0.55,0.65)" style="color:#00ff00"/>
<use href="#hz0" x="0" y="0" width="10" height="10" transform="translate(918.5,481.86) scale(0.55,0.65)" style="color:#00ff00"/>
<use href="#hz0" x="0" y="0" width="10" height="10" transform="translate(924.5,481.86) scale(0.55,0.65)" style="color:#00ff00"/>
<text x="931.0" y="488.4" fill="#00ff00" font-size="8.5" font-weight="bold" textLength="16.5" lengthAdjust="spacingAndGlyphs">M12?5</text>
<use href="#hz0" x="0" y="0" width="10" height="10" transform="translate(918.5,492.29) scale(0.55,0.65)" style="color:#00ff00"/>
<use href="#hz0" x="0" y="0" width="10" height="10" transform="translate(924.5,492.29) scale(0.55,0.65)" style="color:#00ff00"/>
<use href="#hz0" x="0" y="0" width="10" height="10" transform="translate(918.5,502.72) scale(0.55,0.65)" style="color:#00ff00"/>
<use href="#hz0" x="0" y="0" width="10" height="10" transform="translate(918.5,513.15) scale(0.55,0.65)" style="color:#00ff00"/>
<use href="#hz0" x="0" y="0" width="10" height="10" transform="translate(924.5,513.15) scale(0.55,0.65)" style="color:#00ff00"/>
<text x="931.0" y="519.6" fill="#00ff00" font-size="8.5" font-weight="bold" textLength="6.6" lengthAdjust="spacingAndGlyphs">12</text>
<use href="#hz0" x="0" y="0" width="10" height="10" transform="translate(918.5,523.58) scale(0.55,0.65)" style="color:#00ff00"/>
<use href="#hz0" x="0" y="0" width="10" height="10" transform="translate(924.5,523.58) scale(0.55,0.65)" style="color:#00ff00"/>
<text x="931.0" y="530.1" fill="#00ff00" font-size="8.5" font-weight="bold" textLength="16.5" lengthAdjust="spacingAndGlyphs">M12?0</text>
<use href="#hz0" x="0" y="0" width="10" height="10" transform="translate(918.5,534.01) scale(0.55,0.65)" style="color:#00ff00"/>
<use href="#hz0" x="0" y="0" width="10" height="10" transform="translate(924.5,534.01) scale(0.55,0.65)" style="color:#00ff00"/>
<use href="#hz0" x="0" y="0" width="10" height="10" transform="translate(918.5,544.44) scale(0.55,0.65)" style="color:#00ff00"/>
<use href="#hz0" x="0" y="0" width="10" height="10" transform="translate(924.5,544.44) scale(0.55,0.65)" style="color:#00ff00"/>
<text x="931.0" y="550.9" fill="#00ff00" font-size="8.5" font-weight="bold" textLength="6.6" lengthAdjust="spacingAndGlyphs">30</text>
<use href="#hz0" x="0" y="0" width="10" height="10" transform="translate(918.5,554.87) scale(0.55,0.65)" style="color:#00ff00"/>
<use href="#hz0" x="0" y="0" width="10" height="10" transform="translate(924.5,554.87) scale(0.55,0.65)" style="color:#00ff00"/>
<text x="931.0" y="561.4" fill="#00ff00" font-size="8.5" font-weight="bold" textLength="19.8" lengthAdjust="spacingAndGlyphs">M30?30</text>
<use href="#hz0" x="0" y="0" width="10" height="10" transform="translate(918.5,565.3) scale(0.55,0.65)" style="color:#00ff00"/>
<use href="#hz0" x="0" y="0" width="10" height="10" transform="translate(924.5,565.3) scale(0.55,0.65)" style="color:#00ff00"/>
<use href="#hz0" x="0" y="0" width="10" height="10" transform="translate(918.5,575.73) scale(0.55,0.65)" style="color:#00ff00"/>
<use href="#hz0" x="0" y="0" width="10" height="10" transform="translate(924.5,575.73) scale(0.55,0.65)" style="color:#00ff00"/>
<use href="#hz0" x="0" y="0" width="10" height="10" transform="translate(918.5,586.16) scale(0.55,0.65)" style="color:#00ff00"/>
<use href="#hz0" x="0" y="0" width="10" height="10" transform="translate(924.5,586.16) scale(0.55,0.65)" style="color:#00ff00"/>
<use href="#hz0" x="0" y="0" width="10" height="10" transform="translate(930.5,586.16) scale(0.55,0.65)" style="color:#00ff00"/>
<use href="#hz0" x="0" y="0" width="10" height="10" transform="translate(936.5,586.16) scale(0.55,0.65)" style="color:#00ff00"/>
<use href="#hz0" x="0" y="0" width="10" height="10" transform="translate(918.5,596.59) scale(0.55,0.65)" style="color:#00ff00"/>
<use href="#hz0" x="0" y="0" width="10" height="10" transform="translate(924.5,596.59) scale(0.55,0.65)" style="color:#00ff00"/>
<text x="931.0" y="603.1" fill="#00ff00" font-size="8.5" font-weight="bold" textLength="9.9" lengthAdjust="spacingAndGlyphs">150</text>
<use href="#hz0" x="0" y="0" width="10" height="10" transform="translate(918.5,607.02) scale(0.55,0.65)" style="color:#00ff00"/>
<use href="#hz0" x="0" y="0" width="10" height="10" transform="translate(924.5,607.02) scale(0.55,0.65)" style="color:#00ff00"/>
<text x="931.0" y="613.5" fill="#00ff00" font-size="8.5" font-weight="bold" textLength="6.6" lengthAdjust="spacingAndGlyphs">24</text>
<use href="#hz0" x="0" y="0" width="10" height="10" transform="translate(918.5,617.45) scale(0.55,0.65)" style="color:#00ff00"/>
<use href="#hz0" x="0" y="0" width="10" height="10" transform="translate(924.5,617.45) scale(0.55,0.65)" style="color:#00ff00"/>
<text x="931.0" y="624.0" fill="#00ff00" font-size="8.5" font-weight="bold" textLength="16.5" lengthAdjust="spacingAndGlyphs">M24?0</text>
<use href="#hz0" x="0" y="0" width="10" height="10" transform="translate(918.5,627.88) scale(0.55,0.65)" style="color:#00ff00"/>
<use href="#hz0" x="0" y="0" width="10" height="10" transform="translate(924.5,627.88) scale(0.55,0.65)" style="color:#00ff00"/>
<use href="#hz0" x="0" y="0" width="10" height="10" transform="translate(918.5,638.31) scale(0.55,0.65)" style="color:#00ff00"/>
<use href="#hz0" x="0" y="0" width="10" height="10" transform="translate(924.5,638.31) scale(0.55,0.65)" style="color:#00ff00"/>
<use href="#hz0" x="0" y="0" width="10" height="10" transform="translate(990.0,597) scale(0.5,0.65)" style="color:#00ff00"/>
<use href="#hz2" x="0" y="0" width="10" height="10" transform="translate(995.5,597) scale(0.5,0.65)" style="color:#00ff00"/>
<rect x="1070" y="585" width="9" height="8" fill="#0a0"/>
<text x="1059.5" y="592" fill="#00ff00" font-size="8" textLength="19" lengthAdjust="spacingAndGlyphs">23?E09</text>
<use href="#hz1" x="0" y="0" width="10" height="10" transform="translate(856,649.5) scale(0.5,0.8)" style="color:#00ff00"/>
<use href="#hz0" x="0" y="0" width="10" height="10" transform="translate(861,649.5) scale(0.5,0.8)" style="color:#00ff00"/>
<use href="#hz1" x="0" y="0" width="10" height="10" transform="translate(883,650) scale(0.4,0.7)" style="color:#00ff00"/>
<use href="#hz0" x="0" y="0" width="10" height="10" transform="translate(897,650) scale(0.4,0.7)" style="color:#00ff00"/>
<use href="#hz2" x="0" y="0" width="10" height="10" transform="translate(929,650) scale(0.4,0.7)" style="color:#00ff00"/>
<use href="#hz1" x="0" y="0" width="10" height="10" transform="translate(946,650) scale(0.4,0.7)" style="color:#00ff00"/>
<use href="#hz1" x="0" y="0" width="10" height="10" transform="translate(961,649.5) scale(0.5,0.8)" style="color:#00ff00"/>
<use href="#hz0" x="0" y="0" width="10" height="10" transform="translate(966,649.5) scale(0.5,0.8)" style="color:#00ff00"/>
<use href="#hz2" x="0" y="0" width="10" height="10" transform="translate(989,650) scale(0.4,0.7)" style="color:#00ff00"/>
<use href="#hz2" x="0" y="0" width="10" height="10" transform="translate(1004,650) scale(0.4,0.7)" style="color:#00ff00"/>
<use href="#hz2" x="0" y="0" width="10" height="10" transform="translate(1022.0,646.5) scale(0.4,0.55)" style="color:#00ff00"/>
<use href="#hz0" x="0" y="0" width="10" height="10" transform="translate(1026.5,646.5) scale(0.4,0.55)" style="color:#00ff00"/>
<use href="#hz0" x="0" y="0" width="10" height="10" transform="translate(1038.0,646.5) scale(0.4,0.55)" style="color:#00ff00"/>
<use href="#hz1" x="0" y="0" width="10" height="10" transform="translate(1042.5,646.5) scale(0.4,0.55)" style="color:#00ff00"/>
<use href="#hz0" x="0" y="0" width="10" height="10" transform="translate(1026,655) scale(0.4,0.55)" style="color:#00ff00"/>
<use href="#hz0" x="0" y="0" width="10" height="10" transform="translate(1041,655) scale(0.4,0.55)" style="color:#00ff00"/>
<use href="#hz1" x="0" y="0" width="10" height="10" transform="translate(1060,650) scale(0.4,0.7)" style="color:#00ff00"/>
<use href="#hz0" x="0" y="0" width="10" height="10" transform="translate(1074,650) scale(0.4,0.7)" style="color:#00ff00"/>
<use href="#hz1" x="0" y="0" width="10" height="10" transform="translate(856,688.5) scale(0.7,0.6)" style="color:#00ff00"/>
<use href="#hz2" x="0" y="0" width="10" height="10" transform="translate(866,688.5) scale(0.7,0.6)" style="color:#00ff00"/>
<use href="#hz1" x="0" y="0" width="10" height="10" transform="translate(877,688.5) scale(1.3,0.6)" style="color:#00ff00"/>
<use href="#hz0" x="0" y="0" width="10" height="10" transform="translate(906,688.5) scale(0.8,0.6)" style="color:#00ff00"/>
<use href="#hz1" x="0" y="0" width="10" height="10" transform="translate(922,688.5) scale(0.7,0.6)" style="color:#00ff00"/>
<use href="#hz2" x="0" y="0" width="10" height="10" transform="translate(1019.5,668.5) scale(0.5,0.75)" style="color:#00ff00"/>
<use href="#hz2" x="0" y="0" width="10" height="10" transform="translate(1024.7,668.5) scale(0.5,0.75)" style="color:#00ff00"/>
<use href="#hz0" x="0" y="0" width="10" height="10" transform="translate(1029.9,668.5) scale(0.5,0.75)" style="color:#00ff00"/>
<use href="#hz0" x="0" y="0" width="10" height="10" transform="translate(1035.1,668.5) scale(0.5,0.75)" style="color:#00ff00"/>
<use href="#hz1" x="0" y="0" width="10" height="10" transform="translate(1040.3,668.5) scale(0.5,0.75)" style="color:#00ff00"/>
<use href="#hz1" x="0" y="0" width="10" height="10" transform="translate(1045.5,668.5) scale(0.5,0.75)" style="color:#00ff00"/>
<text x="1051" y="676" fill="#00ff00" font-size="9" textLength="15" lengthAdjust="spacingAndGlyphs">17-?</text>
<use href="#hz1" x="0" y="0" width="10" height="10" transform="translate(1045.0,688) scale(0.75,0.65)" style="color:#00ff00"/>
<g shape-rendering="crispEdges">
<line x1="13.5" y1="587.5" x2="39.5" y2="587.5" stroke="#00ffff" stroke-width="1" />
<line x1="13.5" y1="596.5" x2="39.5" y2="596.5" stroke="#00ffff" stroke-width="1" />
<line x1="13.5" y1="609.5" x2="39.5" y2="609.5" stroke="#00ffff" stroke-width="1" />
<line x1="13.5" y1="618.5" x2="39.5" y2="618.5" stroke="#00ffff" stroke-width="1" />
<line x1="13.5" y1="631.5" x2="39.5" y2="631.5" stroke="#00ffff" stroke-width="1" />
<line x1="13.5" y1="640.5" x2="39.5" y2="640.5" stroke="#00ffff" stroke-width="1" />
<line x1="13.5" y1="653.5" x2="39.5" y2="653.5" stroke="#00ffff" stroke-width="1" />
<line x1="13.5" y1="662.5" x2="39.5" y2="662.5" stroke="#00ffff" stroke-width="1" />
<line x1="13.5" y1="675.5" x2="39.5" y2="675.5" stroke="#00ffff" stroke-width="1" />
<line x1="13.5" y1="685.5" x2="39.5" y2="685.5" stroke="#00ffff" stroke-width="1" />
<line x1="13.5" y1="636.5" x2="39.5" y2="636.5" stroke="#0000ff" stroke-width="1" />
</g>
<text x="13.5" y="596" fill="#00ff00" font-size="9" font-weight="bold" textLength="16" lengthAdjust="spacingAndGlyphs">UNBK</text>
<text x="23" y="593" fill="#0000ff" font-size="9.5"  text-anchor="middle" >G</text>
<use href="#hz1" x="0" y="0" width="10" height="10" transform="translate(16,611) scale(0.3,0.7)" style="color:#00ff00"/>
<use href="#hz2" x="0" y="0" width="10" height="10" transform="translate(26,611) scale(0.3,0.7)" style="color:#00ff00"/>
<use href="#hz2" x="0" y="0" width="10" height="10" transform="translate(17,633) scale(0.4,0.65)" style="color:#00ff00"/>
<use href="#hz2" x="0" y="0" width="10" height="10" transform="translate(23,633) scale(0.4,0.65)" style="color:#00ff00"/>
<text x="13.5" y="662" fill="#00ff00" font-size="9" font-weight="bold" textLength="14" lengthAdjust="spacingAndGlyphs">MBBK</text>
<use href="#hz1" x="0" y="0" width="10" height="10" transform="translate(16,678) scale(0.4,0.7)" style="color:#00ff00"/>
<use href="#hz1" x="0" y="0" width="10" height="10" transform="translate(22,678) scale(0.4,0.7)" style="color:#00ff00"/>
<text x="23" y="688" fill="#0000ff" font-size="9.5"  text-anchor="middle" >H</text>
<path d="M34.5,608 L34.5,666" stroke="#ffffff" fill="none" />
<path d="M28,607.5 L40.5,607.5 L34.5,590 Z M31,607 L34.5,592 M38,607 L34.5,592" stroke="#ffffff" fill="none" />
<path d="M30.5,563.5 L36,571 L41.5,563.5 M36,571 L36,578.5" stroke="#ffffff" fill="none" />
<rect x="27.5" y="665.5" width="12.5" height="13.5" stroke="#fff" fill="none"/>
<path d="M40,672.5 L99.5,672.5" stroke="#ffffff" fill="none" />
<path d="M99.5,666.5 L99.5,678.5 L115,672.5 Z M100,669 L113,672.5 M100,676 L113,672.5" stroke="#ffffff" fill="none" />
<path d="M128.5,665 L140.5,680.5 M140.5,665 L128.5,680.5" stroke="#ffffff" fill="none" />
<g shape-rendering="crispEdges">
<rect x="0" y="0" width="1113" height="13" fill="#f0f0f0"/>
<rect x="23" y="0" width="298" height="8" fill="#ffffff"/>
<rect x="386" y="0" width="149" height="8" fill="#ffffff"/>
<rect x="542" y="0" width="158" height="8" fill="#ffffff"/>
<rect x="708" y="0" width="124" height="8" fill="#ffffff"/>
<rect x="840" y="0" width="120" height="8" fill="#e6e6e6"/>
<rect x="840" y="0" width="100" height="7" fill="#f0f0f0"/>
<line x1="22.5" y1="0.5" x2="22.5" y2="8.5" stroke="#d8d8d8" stroke-width="1" />
<line x1="23.5" y1="8.5" x2="321.5" y2="8.5" stroke="#e0e0e0" stroke-width="1" />
<line x1="372.5" y1="0.5" x2="372.5" y2="9.5" stroke="#a0a0a0" stroke-width="1" />
<line x1="378.5" y1="0.5" x2="378.5" y2="9.5" stroke="#a0a0a0" stroke-width="1" />
<line x1="382.5" y1="0.5" x2="382.5" y2="9.5" stroke="#a0a0a0" stroke-width="1" />
<line x1="538.5" y1="0.5" x2="538.5" y2="9.5" stroke="#a0a0a0" stroke-width="1" />
<line x1="704.5" y1="0.5" x2="704.5" y2="9.5" stroke="#a0a0a0" stroke-width="1" />
<line x1="836.5" y1="0.5" x2="836.5" y2="9.5" stroke="#a0a0a0" stroke-width="1" />
<line x1="0.5" y1="10.5" x2="1113.5" y2="10.5" stroke="#a0a0a0" stroke-width="1" />
<line x1="0.5" y1="11.5" x2="1113.5" y2="11.5" stroke="#e3e3e3" stroke-width="1" />
<line x1="0.5" y1="12.5" x2="1113.5" y2="12.5" stroke="#696969" stroke-width="1" />
<rect x="0" y="13" width="13" height="682" fill="#f0f0f0"/>
<line x1="10.5" y1="13.5" x2="10.5" y2="694.5" stroke="#a0a0a0" stroke-width="1" />
<line x1="11.5" y1="13.5" x2="11.5" y2="694.5" stroke="#ffffff" stroke-width="1" />
<line x1="12.5" y1="13.5" x2="12.5" y2="694.5" stroke="#696969" stroke-width="1" />
<rect x="0" y="695" width="1113" height="10" fill="#f0f0f0"/>
<line x1="31.5" y1="695.5" x2="31.5" y2="705.5" stroke="#a0a0a0" stroke-width="1" />
<line x1="49.5" y1="695.5" x2="49.5" y2="705.5" stroke="#a0a0a0" stroke-width="1" />
<line x1="67.5" y1="695.5" x2="67.5" y2="705.5" stroke="#a0a0a0" stroke-width="1" />
<line x1="85.5" y1="695.5" x2="85.5" y2="705.5" stroke="#a0a0a0" stroke-width="1" />
</g>
<path d="M3,2 L10,6 L17,2 L10,-1 Z" stroke="#4a6a9a" fill="#9ab4d8" />
<rect x="31" y="0" width="4" height="4" rx="1" fill="#8a9ac0"/>
<ellipse cx="49" cy="0.5" rx="5.5" ry="3.5" fill="#ffd800" stroke="#2060c0"/>
<rect x="62.5" y="-3" width="10" height="6" fill="#fff" stroke="#4070b0"/>
<ellipse cx="86" cy="1" rx="4" ry="3" fill="#d8d000" stroke="#a0a000"/>
<rect x="93.5" y="-3" width="8" height="5" fill="#fff" stroke="#000"/>
<circle cx="110" cy="0" r="2" fill="none" stroke="#000"/>
<path d="M312,-1 L316,-1 L314,2 Z" stroke="none" fill="#000" />
<path d="M328,6 L333,1 M328,6 L328,3 M328,6 L331,6" stroke="#1a3a7a" fill="none" />
<path d="M333,0 L339,-3 L346,0 L339,3 Z" stroke="#a08000" fill="#f0c800" />
<path d="M351,1 L358,5 L366,1 L358,-2 Z" stroke="#5a7aa8" fill="#a8c0e0" />
<text x="392" y="3.5" fill="#000" font-size="10">□ ByLayer</text>
<text x="612" y="3.5" fill="#000" font-size="10">ByLayer</text>
<text x="752" y="3.5" fill="#000" font-size="10">ByLayer</text>
<text x="846" y="3.5" fill="#8a8a8a" font-size="10">▒▒□</text>
<path d="M526,1 L530,1 L528,3 Z" stroke="none" fill="#000" />
<path d="M691,1 L695,1 L693,3 Z" stroke="none" fill="#000" />
<path d="M823,1 L827,1 L825,3 Z" stroke="none" fill="#000" />
<path d="M947,1 L951,1 L949,3 Z" stroke="none" fill="#000" />
<g shape-rendering="crispEdges">
<line x1="0.5" y1="13.5" x2="9.5" y2="13.5" stroke="#a0a0a0" stroke-width="1" />
<line x1="0.5" y1="14.5" x2="9.5" y2="14.5" stroke="#ffffff" stroke-width="1" />
<line x1="0.5" y1="18.5" x2="9.5" y2="18.5" stroke="#a0a0a0" stroke-width="1" />
<line x1="0.5" y1="19.5" x2="9.5" y2="19.5" stroke="#ffffff" stroke-width="1" />
</g>
<path d="M-1,34 L4,29" stroke="#000" stroke-width="1.3"/><rect x="3" y="26.5" width="3" height="3" fill="#1a6ad8"/>
<path d="M-1,56 L5,48 M2,48 L5,48 L5,51" stroke="#000" stroke-width="1.3" fill="none"/>
<path d="M3,72 A4.5,4.5 0 1 1 3,81" stroke="#2a4a8a" stroke-width="1.3" fill="none"/><rect x="2" y="71" width="2.5" height="2.5" fill="#1a6ad8"/><rect x="2" y="79.5" width="2.5" height="2.5" fill="#1a6ad8"/>
<path d="M-1,95 L4,97 L3,105 L-1,105 Z" stroke="#1a2a5a" fill="#c8d8ec"/>
<rect x="-2" y="118.5" width="6" height="7" stroke="#1a2a5a" fill="#c8d8ec"/><rect x="3" y="116.5" width="3" height="3" fill="#1a6ad8"/>
<path d="M-1,137 L4,135.5" stroke="#555" stroke-width="1.2"/><rect x="3" y="134" width="3" height="3" fill="#1a6ad8"/>
<circle cx="0" cy="165" r="5.5" stroke="#1a2a5a" fill="#c8d8ec"/>
<path d="M-2,183 Q3,180 4,186 Q6,190 3,194 L-2,194 Z" stroke="#1a2a5a" fill="#c8d8ec"/>
<path d="M4,202 Q4,212 -1,211" stroke="#000" stroke-width="1.2" fill="none"/>
<ellipse cx="0" cy="231.5" rx="4" ry="3.5" stroke="#1a2a5a" fill="#c8d8ec"/><rect x="3" y="230" width="2.5" height="2.5" fill="#1a6ad8"/>
<ellipse cx="0" cy="254" rx="4" ry="4" stroke="#444" fill="#c8c8c8"/>
<path d="M-1,268 Q5,268 5,274 L5,280 L-1,280 Z" stroke="#1a2a5a" fill="#c8d8ec"/><path d="M2,281 L5,278 L5,281 Z" fill="#000"/>
<path d="M-1,296 Q4,294 4,299 L4,303 L-1,303 Z" stroke="#6a5a00" fill="#e8c840"/>
<path d="M0,336 L6,336 M0,342 L6,342 M2,333 L2,348 M5,333 L5,348" stroke="#2a6ad0" stroke-width="1.2" fill="none"/>
<path d="M0,359 L6,359 M0,365 L6,365 M2,356 L2,371 M5,356 L5,371" stroke="#000" stroke-width="1.2" fill="none"/><rect x="0" y="360" width="5" height="4" fill="#8a7a30"/>
<path d="M-1,384 L3,381 L6,387 L6,391 L-1,391 Z" stroke="#1a2a5a" fill="#c8d8ec"/>
<rect x="-2" y="401.5" width="7" height="10" stroke="#1a3a8a" fill="#8ab0e8"/><path d="M-1,405 L5,405 M-1,408 L5,408" stroke="#fff"/>
<path d="M-1,435 L3,424 L6,435" stroke="#000" stroke-width="1.3" fill="none"/>
<path d="M20,698 L20,705 M27,698 L22,702 L27,705" stroke="#000" stroke-width="1.6" fill="#000"/>
<path d="M44,698 L39,702 L44,706" stroke="#000" stroke-width="1.6" fill="#000"/>
<path d="M57,698 L62,702 L57,706" stroke="#000" stroke-width="1.6" fill="#000"/>
<path d="M76,698 L81,702 L76,706 M82,698 L82,705" stroke="#000" stroke-width="1.6" fill="#000"/>
<path d="M89,696 L93,705" stroke="#000" fill="none" />
<use href="#hz1" x="0" y="0" width="10" height="10" transform="translate(97,697) scale(1.0,0.9)" style="color:#000"/>
<use href="#hz0" x="0" y="0" width="10" height="10" transform="translate(108,697) scale(1.0,0.9)" style="color:#000"/>
<path d="M124,705 L128,696 L166,696 L170,705" fill="#fff" stroke="#000"/>
<use href="#hz1" x="0" y="0" width="10" height="10" transform="translate(130,697) scale(0.9,0.9)" style="color:#000"/>
<use href="#hz2" x="0" y="0" width="10" height="10" transform="translate(140,697) scale(0.9,0.9)" style="color:#000"/>
<text x="151" y="705" fill="#000" font-size="11">1</text>
</svg>
</body></html>
